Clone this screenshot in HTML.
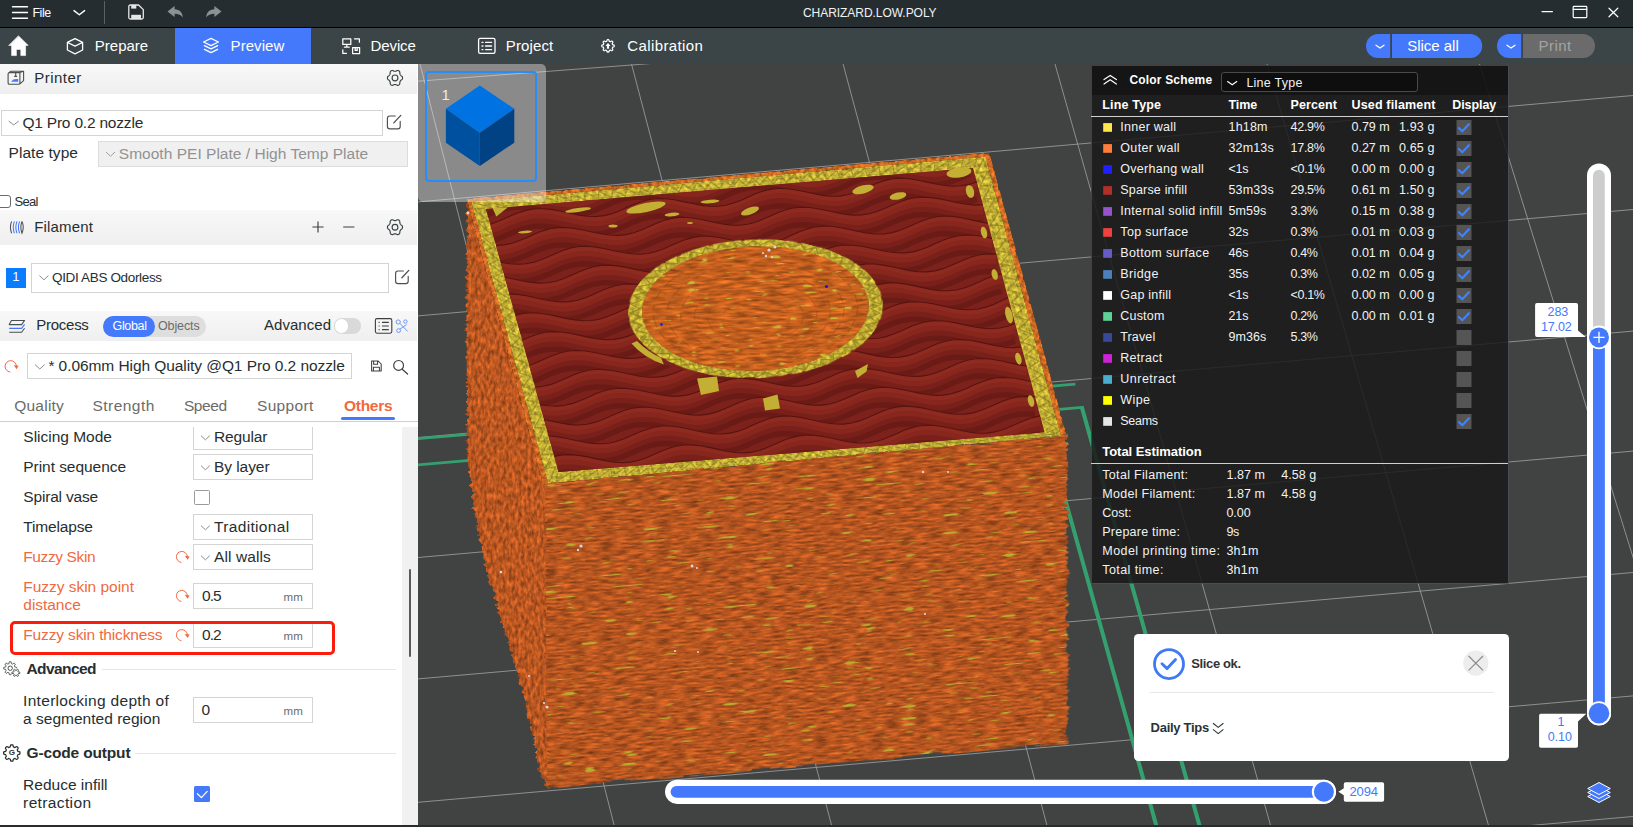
<!DOCTYPE html>
<html lang="en">
<head>
<meta charset="utf-8">
<title>CHARIZARD.LOW.POLY</title>
<style>
*{box-sizing:border-box;margin:0;padding:0}
html,body{width:1633px;height:827px;overflow:hidden;background:#414342;font-family:"Liberation Sans",sans-serif;color:#262e30}
.abs,.t,.box,.hdr{position:absolute}
#app{position:relative;width:1633px;height:827px;overflow:hidden}
.t{white-space:nowrap;line-height:1}
.w{color:#fff}
.hdr{left:0;width:417px;background:linear-gradient(#f8f8f8,#efefef)}
.box{border:1px solid #d4d4d4;background:#fff}
svg{position:absolute;overflow:visible}
</style>
</head>
<body>
<div id="app">
<div class="abs" style="left:418px;top:64px;width:1215px;height:763px;background:#414342;overflow:hidden">
<svg style="left:0;top:0" width="1215" height="763" viewBox="418 64 1215 763">
<defs>
<filter id="fFront" x="500" y="480" width="620" height="400" filterUnits="userSpaceOnUse" color-interpolation-filters="sRGB">
 <feFlood flood-color="#b55520" result="base"/>
 <feTurbulence type="fractalNoise" baseFrequency="0.07 0.5" numOctaves="3" seed="3" result="n"/>
 <feColorMatrix in="n" type="matrix" values="1 0 0 0 0  1 0 0 0 0  1 0 0 0 0  0 0 0 0 1" result="g"/>
 <feComposite in="base" in2="g" operator="arithmetic" k1="1.0" k2="0.5" k3="0" k4="0" result="c"/>
 <feTurbulence type="fractalNoise" baseFrequency="0.05 0.33" numOctaves="1" seed="11" result="n2"/>
 <feColorMatrix in="n2" type="matrix" values="0 0 0 0 0.72  0 0 0 0 0.68  0 0 0 0 0.18  16 0 0 0 -10.9" result="y"/>
 <feComposite in="y" in2="c" operator="over" result="cy"/>
 <feTurbulence type="fractalNoise" baseFrequency="0.02 0.3" numOctaves="2" seed="5" result="d"/>
 <feDisplacementMap in="SourceGraphic" in2="d" scale="9" xChannelSelector="R" yChannelSelector="G" result="shape"/>
 <feComposite in="cy" in2="shape" operator="in"/>
</filter>
<filter id="fLeft" x="440" y="170" width="140" height="660" filterUnits="userSpaceOnUse" color-interpolation-filters="sRGB">
 <feFlood flood-color="#ba5721" result="base"/>
 <feTurbulence type="fractalNoise" baseFrequency="0.32 0.16" numOctaves="2" seed="8" result="n"/>
 <feColorMatrix in="n" type="matrix" values="1 0 0 0 0  1 0 0 0 0  1 0 0 0 0  0 0 0 0 1" result="g"/>
 <feComposite in="base" in2="g" operator="arithmetic" k1="0.9" k2="0.55" k3="0" k4="0" result="c"/>
 <feTurbulence type="fractalNoise" baseFrequency="0.06 0.25" numOctaves="2" seed="15" result="d"/>
 <feDisplacementMap in="SourceGraphic" in2="d" scale="8" xChannelSelector="R" yChannelSelector="G" result="shape"/>
 <feComposite in="c" in2="shape" operator="in"/>
</filter>
<filter id="fYel" x="440" y="130" width="660" height="380" filterUnits="userSpaceOnUse" color-interpolation-filters="sRGB">
 <feTurbulence type="fractalNoise" baseFrequency="0.25 0.25" numOctaves="2" seed="21" result="n"/>
 <feColorMatrix in="n" type="matrix" values="1 0 0 0 0  1 0 0 0 0  1 0 0 0 0  0 0 0 0 1" result="g"/>
 <feComposite in="SourceGraphic" in2="g" operator="arithmetic" k1="0.9" k2="0.55" k3="0" k4="0" result="c"/>
 <feTurbulence type="fractalNoise" baseFrequency="0.12 0.12" numOctaves="2" seed="2" result="d"/>
 <feDisplacementMap in="SourceGraphic" in2="d" scale="4" xChannelSelector="R" yChannelSelector="G" result="shape"/>
 <feComposite in="c" in2="shape" operator="in"/>
</filter>
<filter id="fHole" x="620" y="230" width="280" height="160" filterUnits="userSpaceOnUse" color-interpolation-filters="sRGB">
 <feTurbulence type="fractalNoise" baseFrequency="0.06 0.4" numOctaves="2" seed="9" result="n"/>
 <feColorMatrix in="n" type="matrix" values="1 0 0 0 0  1 0 0 0 0  1 0 0 0 0  0 0 0 0 1" result="g"/>
 <feComposite in="SourceGraphic" in2="g" operator="arithmetic" k1="0.9" k2="0.55" k3="0" k4="0" result="c"/>
 <feTurbulence type="fractalNoise" baseFrequency="0.07 0.3" numOctaves="1" seed="4" result="n2"/>
 <feColorMatrix in="n2" type="matrix" values="0 0 0 0 0.78  0 0 0 0 0.72  0 0 0 0 0.2  16 0 0 0 -10.8" result="y"/>
 <feComposite in="y" in2="c" operator="over" result="cy"/>
 <feComposite in="cy" in2="SourceGraphic" operator="in"/>
</filter>
<clipPath id="cRed"><polygon points="486,209 973,168 1044.6,432.3 558.6,472"/></clipPath>
</defs>
<path d="M418 81.2L650 63.6M418 201.9L1633 95.5M418 315.9L1633 209.5M418 437.5L1633 331.1M418 557.5L1633 451.1M418 678.9L1633 572.5M418 802.3L1633 695.9M418 922.9L1633 816.5M420 64L614.6 827M631.5 64L832 827M843.1 64L1047.4 827M1055 64L1271 827M1267 64L1489 827M1479.5 64L1717 827" stroke="#9a9d9e" stroke-width="1" fill="none" opacity="0.85"/>
<path d="M418 438.6L1075.4 384.2M418 464.8L1082 407.4" stroke="#35a06f" stroke-width="2.7" fill="none"/>
<path d="M1081.6 406.4L1200 827.4M1033 384L1156.8 827.4" stroke="#35a06f" stroke-width="4" fill="none"/>
<polygon points="467,199 553,482 554,787 547,787.5 539.7,770 526.4,704 506.5,637 486.5,571 473,504 467.5,460 466.5,340" fill="#ba5721" filter="url(#fLeft)"/>
<g transform="matrix(1 -0.0875 0 1 0 0)"><polygon points="545,529.8 1067,527.4 1067.5,836.6 547,835.4" fill="#b55520" filter="url(#fFront)"/></g>
<polygon points="466.5,198.5 989.5,152.5 1066.5,434.5 543,484.5" fill="#cf6a25" filter="url(#fYel)"/>
<polygon points="471,201.5 985.5,156.5 1061,436 548,483.5" fill="#c2af34" filter="url(#fYel)"/>
<path d="M472.8 202.4L490.9 207.5L486.8 201.2L504.3 206.4L500.8 200.0L517.8 205.3L514.8 198.7L531.2 204.1L528.8 197.5L544.6 203.0L542.8 196.3L558.1 201.8L556.8 195.1L571.5 200.7L570.8 193.9L584.9 199.6L584.8 192.6L598.4 198.4L598.8 191.4L611.8 197.3L612.9 190.2L625.2 196.2L626.9 189.0L638.7 195.0L640.9 187.8L652.1 193.9L654.9 186.5L665.5 192.8L668.9 185.3L679.0 191.6L682.9 184.1L692.4 190.5L696.9 182.9L705.8 189.3L710.9 181.7L719.3 188.2L724.9 180.4L732.7 187.1L738.9 179.2L746.1 185.9L752.9 178.0L759.6 184.8L766.9 176.8L773.0 183.7L780.9 175.6L786.4 182.5L794.9 174.3L799.9 181.4L808.9 173.1L813.3 180.3L822.9 171.9L826.7 179.1L836.9 170.7L840.2 178.0L850.9 169.5L853.6 176.8L865.0 168.2L867.0 175.7L879.0 167.0L880.5 174.6L893.0 165.8L893.9 173.4L907.0 164.6L907.3 172.3L921.0 163.4L920.8 171.2L935.0 162.1L934.2 170.0L949.0 160.9L947.6 168.9L963.0 159.7L961.1 167.8L977.0 158.5L974.5 166.6M984.0 157.9L976.3 173.1L987.7 171.4L979.8 186.1L991.3 185.0L983.3 199.1L995.0 198.5L986.8 212.1L998.6 212.1L990.3 225.0L1002.3 225.6L993.8 238.0L1006.0 239.2L997.4 251.0L1009.6 252.7L1000.9 264.0L1013.3 266.2L1004.4 277.0L1016.9 279.8L1007.9 289.9L1020.6 293.3L1011.4 302.9L1024.3 306.9L1014.9 315.9L1027.9 320.4L1018.4 328.9L1031.6 334.0L1022.0 341.9L1035.2 347.5L1025.5 354.9L1038.9 361.1L1029.0 367.8L1042.6 374.6L1032.5 380.8L1046.2 388.1L1036.0 393.8L1049.9 401.7L1039.5 406.8L1053.5 415.2L1043.1 419.8L1057.2 428.8L1046.6 432.7M1059.0 435.6L1039.9 433.3L1045.1 436.8L1026.5 434.4L1031.1 438.1L1013.1 435.5L1017.1 439.4L999.7 436.6L1003.2 440.7L986.3 437.8L989.2 441.9L972.8 438.9L975.2 443.2L959.4 440.0L961.3 444.5L946.0 441.1L947.3 445.8L932.6 442.2L933.3 447.0L919.2 443.3L919.4 448.3L905.8 444.4L905.4 449.6L892.4 445.5L891.4 450.9L879.0 446.7L877.5 452.1L865.6 447.8L863.5 453.4L852.2 448.9L849.5 454.7L838.8 450.0L835.6 456.0L825.4 451.1L821.6 457.2L812.0 452.2L807.6 458.5L798.6 453.3L793.7 459.8L785.2 454.5L779.7 461.1L771.8 455.6L765.7 462.3L758.4 456.7L751.8 463.6L745.0 457.8L737.8 464.9L731.6 458.9L723.8 466.2L718.2 460.0L709.9 467.4L704.8 461.1L695.9 468.7L691.4 462.2L681.9 470.0L678.0 463.4L668.0 471.3L664.6 464.5L654.0 472.6L651.2 465.6L640.1 473.8L637.8 466.7L626.1 475.1L624.3 467.8L612.1 476.4L610.9 468.9L598.2 477.7L597.5 470.0L584.2 478.9L584.1 471.2L570.2 480.2L570.7 472.3L556.3 481.5L557.3 473.4M549.3 482.1L555.5 466.9L545.5 468.5L552.0 454.0L541.8 454.8L548.4 441.0L538.1 441.2L544.8 428.1L534.4 427.5L541.3 415.1L530.6 413.9L537.7 402.2L526.9 400.3L534.1 389.3L523.2 386.6L530.6 376.3L519.4 373.0L527.0 363.4L515.7 359.3L523.4 350.4L512.0 345.7L519.9 337.5L508.2 332.0L516.3 324.6L504.5 318.4L512.7 311.6L500.8 304.7L509.2 298.7L497.0 291.1L505.6 285.7L493.3 277.4L502.0 272.8L489.6 263.8L498.5 259.9L485.9 250.2L494.9 246.9L482.1 236.5L491.3 234.0L478.4 222.9L487.8 221.0L474.7 209.2L484.2 208.1" stroke="#8f7f1e" stroke-width="1.3" fill="none" opacity="0.75" stroke-linejoin="round"/>
<path d="M475.5 203.8L981.8 159.9M481.5 206.8L976.8 164.6M981.8 159.9L1056.1 434.9M976.8 164.6L1049.5 433.4M1056.1 434.9L551.2 480.1M1049.5 433.4L555.4 475.4M551.2 480.1L475.5 203.8M555.4 475.4L481.5 206.8" stroke="#dccb55" stroke-width="1" fill="none" opacity="0.4"/>
<polygon points="486,209 973,168 1044.6,432.3 558.6,472" fill="#7c211b"/>
<g clip-path="url(#cRed)" fill="none">
<defs><path id="wv0" d="M476.4 174.1L484.1 172.0L492.1 171.0L500.5 171.1L509.1 172.2L517.9 173.9L526.7 175.9L535.5 177.6L544.1 178.7L552.4 178.8L560.4 177.7L568.2 175.6L575.7 172.7L583.1 169.4L590.5 166.2L598.0 163.4L605.8 161.6L613.9 160.8L622.3 161.1L631.0 162.3L639.8 164.1L648.6 166.1L657.4 167.7L665.9 168.6L674.2 168.5L682.2 167.3L689.9 165.0L697.3 162.0L704.7 158.7L712.2 155.5L719.7 152.8L727.6 151.2L735.7 150.6L744.2 151.1L752.9 152.5L761.7 154.4L770.5 156.3L779.3 157.8L787.8 158.5L796.0 158.2L803.9 156.8L811.5 154.3L819.0 151.2L826.4 147.9L833.8 144.8L841.5 142.3L849.4 140.8L857.6 140.4L866.1 141.1L874.8 142.6L883.6 144.6L892.4 146.5L901.1 147.9L909.6 148.4L917.7 147.9L925.6 146.2L933.2 143.6L940.6 140.5L948.0 137.1L955.5 134.1L963.2 131.8"/></defs>
<use href="#wv0" stroke="#8f2a20" stroke-width="5.4" transform="translate(0,2.5)"/>
<use href="#wv0" stroke="#86261d" stroke-width="5.4" transform="translate(0,7.5)"/>
<use href="#wv0" stroke="#79201a" stroke-width="5.4" transform="translate(0,12.5)"/>
<use href="#wv0" stroke="#6b1b16" stroke-width="5.4" transform="translate(0,17.5)"/>
<defs><path id="wv1" d="M483.3 199.3L490.7 196.0L498.2 193.1L505.9 190.9L513.9 189.8L522.3 189.9L530.8 190.9L539.6 192.6L548.5 194.6L557.3 196.4L565.9 197.5L574.2 197.6L582.3 196.7L590.0 194.7L597.5 191.8L604.9 188.5L612.3 185.2L619.9 182.4L627.7 180.5L635.7 179.6L644.1 179.9L652.7 181.0L661.5 182.8L670.4 184.8L679.1 186.5L687.7 187.5L696.0 187.4L704.0 186.3L711.7 184.1L719.2 181.1L726.6 177.8L734.0 174.5L741.6 171.9L749.4 170.1L757.5 169.4L765.9 169.9L774.6 171.2L783.4 173.1L792.3 175.0L801.0 176.6L809.5 177.4L817.7 177.2L825.7 175.8L833.3 173.4L840.8 170.4L848.2 167.0L855.6 163.9L863.3 161.3L871.1 159.8L879.3 159.3L887.8 159.9L896.5 161.4L905.3 163.3L914.1 165.2L922.8 166.7L931.3 167.3L939.5 166.9L947.4 165.3L955.0 162.8L962.4 159.6L969.8 156.3"/></defs>
<use href="#wv1" stroke="#8f2a20" stroke-width="5.4" transform="translate(0,2.5)"/>
<use href="#wv1" stroke="#86261d" stroke-width="5.4" transform="translate(0,7.5)"/>
<use href="#wv1" stroke="#79201a" stroke-width="5.4" transform="translate(0,12.5)"/>
<use href="#wv1" stroke="#6b1b16" stroke-width="5.4" transform="translate(0,17.5)"/>
<defs><path id="wv2" d="M490.2 224.2L497.8 221.6L505.2 218.3L512.6 215.0L520.1 212.1L527.8 209.9L535.7 208.7L544.0 208.7L552.6 209.6L561.4 211.3L570.2 213.3L579.0 215.1L587.7 216.3L596.0 216.5L604.1 215.6L611.9 213.7L619.4 210.9L626.8 207.6L634.2 204.3L641.7 201.5L649.5 199.5L657.5 198.5L665.9 198.7L674.5 199.8L683.3 201.6L692.1 203.5L700.9 205.2L709.5 206.3L717.8 206.3L725.8 205.2L733.5 203.1L741.0 200.2L748.4 196.9L755.8 193.6L763.4 190.9L771.2 189.1L779.3 188.3L787.7 188.7L796.3 190.0L805.1 191.8L814.0 193.8L822.7 195.4L831.2 196.3L839.5 196.1L847.5 194.8L855.1 192.5L862.6 189.5L870.0 186.1L877.4 183.0L885.0 180.4L892.9 178.7L901.0 178.2L909.5 178.7L918.2 180.2L927.0 182.1L935.8 184.0L944.5 185.5L953.0 186.2L961.2 185.8L969.1 184.4L976.8 181.9"/></defs>
<use href="#wv2" stroke="#8f2a20" stroke-width="5.4" transform="translate(0,2.5)"/>
<use href="#wv2" stroke="#86261d" stroke-width="5.4" transform="translate(0,7.5)"/>
<use href="#wv2" stroke="#79201a" stroke-width="5.4" transform="translate(0,12.5)"/>
<use href="#wv2" stroke="#6b1b16" stroke-width="5.4" transform="translate(0,17.5)"/>
<defs><path id="wv3" d="M496.1 245.5L504.2 244.9L512.0 243.2L519.6 240.6L527.1 237.4L534.4 234.1L541.9 231.1L549.6 228.8L557.6 227.6L565.8 227.5L574.4 228.4L583.1 230.0L592.0 232.0L600.8 233.8L609.4 235.0L617.8 235.4L625.9 234.6L633.7 232.7L641.2 230.0L648.6 226.7L656.0 223.4L663.5 220.5L671.3 218.4L679.3 217.4L687.6 217.5L696.2 218.5L705.0 220.3L713.8 222.2L722.6 224.0L731.2 225.1L739.5 225.2L747.6 224.2L755.3 222.2L762.8 219.3L770.2 216.0L777.6 212.7L785.2 210.0L793.0 208.0L801.0 207.2L809.4 207.5L818.0 208.7L826.8 210.5L835.7 212.5L844.4 214.2L853.0 215.1L861.3 215.0L869.2 213.8L876.9 211.6L884.4 208.6L891.8 205.3L899.2 202.1L906.8 199.4L914.7 197.7L922.8 197.1L931.2 197.6L939.9 198.9L948.7 200.8L957.5 202.8L966.2 204.3L974.8 205.1L983.0 204.8"/></defs>
<use href="#wv3" stroke="#8f2a20" stroke-width="5.4" transform="translate(0,2.5)"/>
<use href="#wv3" stroke="#86261d" stroke-width="5.4" transform="translate(0,7.5)"/>
<use href="#wv3" stroke="#79201a" stroke-width="5.4" transform="translate(0,12.5)"/>
<use href="#wv3" stroke="#6b1b16" stroke-width="5.4" transform="translate(0,17.5)"/>
<defs><path id="wv4" d="M500.7 262.3L509.4 263.7L517.9 264.3L526.0 263.8L533.9 262.2L541.5 259.6L548.9 256.5L556.3 253.2L563.8 250.1L571.4 247.8L579.4 246.5L587.6 246.3L596.1 247.1L604.9 248.7L613.7 250.7L622.5 252.5L631.2 253.8L639.6 254.2L647.7 253.5L655.5 251.7L663.1 249.0L670.5 245.8L677.9 242.5L685.4 239.6L693.1 237.4L701.1 236.3L709.4 236.3L717.9 237.3L726.7 239.0L735.5 241.0L744.3 242.8L753.0 243.9L761.3 244.1L769.4 243.2L777.1 241.2L784.6 238.4L792.0 235.1L799.4 231.8L807.0 229.0L814.7 227.0L822.8 226.1L831.1 226.3L839.8 227.5L848.5 229.3L857.4 231.3L866.1 233.0L874.7 234.0L883.0 234.0L891.0 232.9L898.7 230.7L906.2 227.8L913.6 224.4L921.0 221.2L928.6 218.5L936.4 216.7L944.5 216.0L952.9 216.4L961.6 217.7L970.4 219.6L979.2 221.6L987.9 223.2"/></defs>
<use href="#wv4" stroke="#8f2a20" stroke-width="5.4" transform="translate(0,2.5)"/>
<use href="#wv4" stroke="#86261d" stroke-width="5.4" transform="translate(0,7.5)"/>
<use href="#wv4" stroke="#79201a" stroke-width="5.4" transform="translate(0,12.5)"/>
<use href="#wv4" stroke="#6b1b16" stroke-width="5.4" transform="translate(0,17.5)"/>
<defs><path id="wv5" d="M504.8 277.1L513.6 279.0L522.5 281.0L531.2 282.4L539.7 283.1L547.8 282.7L555.7 281.2L563.3 278.7L570.8 275.6L578.1 272.2L585.6 269.2L593.2 266.8L601.2 265.4L609.4 265.1L617.9 265.9L626.6 267.4L635.5 269.4L644.3 271.2L652.9 272.6L661.4 273.1L669.5 272.5L677.3 270.8L684.9 268.1L692.3 264.9L699.7 261.6L707.2 258.6L714.9 256.4L722.8 255.2L731.1 255.1L739.7 256.1L748.4 257.7L757.3 259.7L766.1 261.5L774.7 262.7L783.1 263.0L791.1 262.2L798.9 260.3L806.5 257.5L813.9 254.3L821.3 251.0L828.8 248.1L836.5 246.0L844.5 245.0L852.9 245.2L861.5 246.3L870.2 248.0L879.1 250.0L887.9 251.8L896.4 252.8L904.8 252.9L912.8 251.9L920.5 249.8L928.0 246.9L935.4 243.6L942.8 240.3L950.4 237.6L958.2 235.7L966.2 234.9L974.6 235.3L983.3 236.5L992.1 238.4"/></defs>
<use href="#wv5" stroke="#8f2a20" stroke-width="5.4" transform="translate(0,2.5)"/>
<use href="#wv5" stroke="#86261d" stroke-width="5.4" transform="translate(0,7.5)"/>
<use href="#wv5" stroke="#79201a" stroke-width="5.4" transform="translate(0,12.5)"/>
<use href="#wv5" stroke="#6b1b16" stroke-width="5.4" transform="translate(0,17.5)"/>
<defs><path id="wv6" d="M509.4 293.9L517.9 294.4L526.6 295.8L535.4 297.7L544.2 299.7L552.9 301.2L561.4 301.9L569.6 301.6L577.5 300.2L585.2 297.7L592.6 294.7L600.0 291.3L607.4 288.2L615.1 285.8L623.0 284.3L631.2 283.9L639.6 284.6L648.4 286.1L657.2 288.1L666.0 290.0L674.7 291.4L683.1 291.9L691.3 291.4L699.1 289.8L706.7 287.2L714.1 284.0L721.5 280.7L729.0 277.7L736.7 275.4L744.6 274.1L752.9 274.0L761.4 274.8L770.1 276.5L779.0 278.4L787.8 280.3L796.4 281.6L804.8 281.9L812.9 281.2L820.7 279.4L828.3 276.6L835.7 273.4L843.1 270.1L850.6 267.2L858.3 265.1L866.3 264.0L874.6 264.0L883.2 265.1L891.9 266.8L900.8 268.8L909.6 270.6L918.2 271.7L926.5 271.9L934.5 270.9L942.3 268.9L949.8 266.1L957.2 262.8L964.6 259.5L972.1 256.7L979.9 254.7L988.0 253.9L996.3 254.1"/></defs>
<use href="#wv6" stroke="#8f2a20" stroke-width="5.4" transform="translate(0,2.5)"/>
<use href="#wv6" stroke="#86261d" stroke-width="5.4" transform="translate(0,7.5)"/>
<use href="#wv6" stroke="#79201a" stroke-width="5.4" transform="translate(0,12.5)"/>
<use href="#wv6" stroke="#6b1b16" stroke-width="5.4" transform="translate(0,17.5)"/>
<defs><path id="wv7" d="M515.3 315.2L523.1 313.4L531.2 312.8L539.7 313.2L548.3 314.5L557.1 316.4L566.0 318.4L574.7 319.9L583.2 320.7L591.4 320.5L599.4 319.2L607.0 316.8L614.5 313.8L621.8 310.4L629.3 307.3L636.9 304.8L644.7 303.2L652.9 302.8L661.4 303.4L670.1 304.9L678.9 306.8L687.7 308.7L696.4 310.2L704.9 310.8L713.1 310.4L720.9 308.8L728.5 306.3L736.0 303.2L743.4 299.8L750.8 296.8L758.5 294.4L766.4 293.0L774.6 292.8L783.1 293.6L791.9 295.2L800.7 297.2L809.5 299.0L818.2 300.4L826.6 300.8L834.7 300.2L842.5 298.4L850.1 295.8L857.5 292.6L864.9 289.2L872.4 286.3L880.1 284.1L888.0 282.9L896.3 282.9L904.9 283.9L913.6 285.6L922.5 287.6L931.3 289.4L939.9 290.6L948.2 290.8L956.3 290.0L964.1 288.0L971.6 285.2L979.0 281.9L986.4 278.6L993.9 275.8L1001.7 273.8"/></defs>
<use href="#wv7" stroke="#8f2a20" stroke-width="5.4" transform="translate(0,2.5)"/>
<use href="#wv7" stroke="#86261d" stroke-width="5.4" transform="translate(0,7.5)"/>
<use href="#wv7" stroke="#79201a" stroke-width="5.4" transform="translate(0,12.5)"/>
<use href="#wv7" stroke="#6b1b16" stroke-width="5.4" transform="translate(0,17.5)"/>
<defs><path id="wv8" d="M522.2 340.1L529.6 336.9L537.1 334.2L544.9 332.3L553.0 331.6L561.4 332.0L570.1 333.3L578.9 335.1L587.7 337.1L596.4 338.7L605.0 339.6L613.2 339.4L621.2 338.1L628.8 335.9L636.3 332.8L643.7 329.5L651.1 326.4L658.7 323.8L666.5 322.2L674.7 321.6L683.1 322.2L691.8 323.6L700.6 325.5L709.5 327.5L718.2 329.0L726.6 329.7L734.8 329.3L742.7 327.8L750.4 325.4L757.8 322.3L765.2 318.9L772.6 315.9L780.3 313.4L788.2 312.0L796.4 311.7L804.9 312.4L813.6 314.0L822.4 315.9L831.2 317.8L839.9 319.2L848.3 319.7L856.4 319.2L864.3 317.5L871.9 314.9L879.3 311.7L886.7 308.4L894.1 305.4L901.8 303.1L909.8 301.9L918.0 301.8L926.6 302.7L935.3 304.3L944.1 306.3L952.9 308.2L961.6 309.4L970.0 309.8L978.0 309.0L985.8 307.1L993.4 304.4L1000.8 301.1L1008.2 297.8"/></defs>
<use href="#wv8" stroke="#8f2a20" stroke-width="5.4" transform="translate(0,2.5)"/>
<use href="#wv8" stroke="#86261d" stroke-width="5.4" transform="translate(0,7.5)"/>
<use href="#wv8" stroke="#79201a" stroke-width="5.4" transform="translate(0,12.5)"/>
<use href="#wv8" stroke="#6b1b16" stroke-width="5.4" transform="translate(0,17.5)"/>
<defs><path id="wv9" d="M529.2 365.3L536.7 362.5L544.0 359.2L551.4 355.9L559.0 353.2L566.7 351.3L574.8 350.5L583.2 350.8L591.8 352.0L600.6 353.8L609.4 355.8L618.2 357.5L626.7 358.4L635.0 358.3L643.0 357.1L650.7 354.9L658.1 352.0L665.5 348.6L672.9 345.4L680.5 342.8L688.3 341.1L696.4 340.5L704.9 341.0L713.5 342.3L722.3 344.2L731.2 346.2L739.9 347.8L748.4 348.5L756.6 348.3L764.5 346.9L772.2 344.5L779.6 341.4L787.0 338.1L794.4 335.0L802.0 332.5L809.9 331.0L818.1 330.6L826.6 331.2L835.3 332.7L844.1 334.7L852.9 336.6L861.6 338.0L870.0 338.6L878.2 338.2L886.1 336.6L893.6 334.0L901.1 330.9L908.5 327.5L915.9 324.5L923.6 322.2L931.5 320.9L939.8 320.7L948.3 321.5L957.0 323.1L965.8 325.1L974.6 327.0L983.3 328.3L991.7 328.7L999.8 328.0L1007.6 326.2L1015.1 323.5"/></defs>
<use href="#wv9" stroke="#8f2a20" stroke-width="5.4" transform="translate(0,2.5)"/>
<use href="#wv9" stroke="#86261d" stroke-width="5.4" transform="translate(0,7.5)"/>
<use href="#wv9" stroke="#79201a" stroke-width="5.4" transform="translate(0,12.5)"/>
<use href="#wv9" stroke="#6b1b16" stroke-width="5.4" transform="translate(0,17.5)"/>
<defs><path id="wv10" d="M535.2 387.2L543.2 386.3L551.0 384.4L558.5 381.6L565.9 378.3L573.3 375.0L580.8 372.2L588.5 370.2L596.6 369.3L604.9 369.6L613.5 370.7L622.3 372.5L631.2 374.5L639.9 376.2L648.5 377.2L656.8 377.2L664.8 376.1L672.5 374.0L680.0 371.1L687.3 367.8L694.7 364.5L702.3 361.9L710.1 360.1L718.2 359.4L726.6 359.8L735.3 361.1L744.1 363.0L752.9 364.9L761.6 366.6L770.1 367.4L778.4 367.2L786.3 365.9L794.0 363.6L801.4 360.5L808.8 357.2L816.2 354.1L823.8 351.5L831.7 349.9L839.8 349.5L848.3 350.0L857.0 351.5L865.8 353.4L874.6 355.4L883.3 356.9L891.8 357.5L899.9 357.1L907.8 355.6L915.4 353.2L922.9 350.0L930.2 346.7L937.7 343.6L945.3 341.2L953.3 339.8L961.5 339.6L970.0 340.3L978.7 341.9L987.5 343.9L996.3 345.8L1005.0 347.2L1013.4 347.6L1021.5 347.0"/></defs>
<use href="#wv10" stroke="#8f2a20" stroke-width="5.4" transform="translate(0,2.5)"/>
<use href="#wv10" stroke="#86261d" stroke-width="5.4" transform="translate(0,7.5)"/>
<use href="#wv10" stroke="#79201a" stroke-width="5.4" transform="translate(0,12.5)"/>
<use href="#wv10" stroke="#6b1b16" stroke-width="5.4" transform="translate(0,17.5)"/>
<defs><path id="wv11" d="M540.0 404.6L548.6 405.8L557.0 406.1L565.0 405.3L572.8 403.4L580.3 400.6L587.7 397.4L595.1 394.1L602.6 391.2L610.3 389.2L618.4 388.2L626.7 388.4L635.3 389.5L644.1 391.2L652.9 393.2L661.7 395.0L670.2 396.1L678.6 396.1L686.6 395.1L694.3 393.0L701.8 390.2L709.2 386.9L716.6 383.6L724.1 380.9L731.9 379.0L740.0 378.3L748.3 378.6L757.0 379.9L765.8 381.7L774.6 383.7L783.3 385.4L791.9 386.3L800.1 386.2L808.1 384.9L815.7 382.7L823.2 379.7L830.6 376.4L838.0 373.2L845.6 370.6L853.4 368.9L861.6 368.4L870.0 368.9L878.7 370.3L887.5 372.2L896.3 374.2L905.0 375.7L913.5 376.4L921.7 376.1L929.6 374.7L937.2 372.3L944.7 369.2L952.0 365.9L959.5 362.8L967.1 360.3L975.0 358.8L983.2 358.5L991.7 359.2L1000.4 360.7L1009.2 362.7L1018.0 364.6L1026.6 366.0"/></defs>
<use href="#wv11" stroke="#8f2a20" stroke-width="5.4" transform="translate(0,2.5)"/>
<use href="#wv11" stroke="#86261d" stroke-width="5.4" transform="translate(0,7.5)"/>
<use href="#wv11" stroke="#79201a" stroke-width="5.4" transform="translate(0,12.5)"/>
<use href="#wv11" stroke="#6b1b16" stroke-width="5.4" transform="translate(0,17.5)"/>
<defs><path id="wv12" d="M544.1 419.5L552.9 421.4L561.7 423.3L570.4 424.6L578.8 425.0L586.8 424.2L594.6 422.4L602.2 419.7L609.6 416.5L617.0 413.2L624.4 410.3L632.1 408.2L640.1 407.1L648.4 407.2L657.0 408.2L665.8 410.0L674.6 412.0L683.4 413.7L692.0 414.9L700.3 415.1L708.4 414.1L716.1 412.1L723.6 409.3L731.0 406.0L738.4 402.8L745.9 400.0L753.7 398.0L761.7 397.2L770.1 397.4L778.7 398.6L787.5 400.5L796.3 402.5L805.0 404.2L813.6 405.1L821.9 405.1L829.8 404.0L837.5 401.8L845.0 398.8L852.4 395.5L859.8 392.3L867.4 389.7L875.2 387.9L883.3 387.3L891.7 387.7L900.3 389.1L909.1 391.0L918.0 392.9L926.7 394.5L935.2 395.4L943.4 395.1L951.3 393.8L959.0 391.4L966.4 388.4L973.8 385.0L981.2 381.9L988.8 379.4L996.7 377.8L1004.9 377.4L1013.3 378.0L1022.0 379.5L1030.8 381.5"/></defs>
<use href="#wv12" stroke="#8f2a20" stroke-width="5.4" transform="translate(0,2.5)"/>
<use href="#wv12" stroke="#86261d" stroke-width="5.4" transform="translate(0,7.5)"/>
<use href="#wv12" stroke="#79201a" stroke-width="5.4" transform="translate(0,12.5)"/>
<use href="#wv12" stroke="#6b1b16" stroke-width="5.4" transform="translate(0,17.5)"/>
<defs><path id="wv13" d="M548.6 435.8L557.1 436.6L565.8 438.2L574.7 440.2L583.5 442.0L592.1 443.4L600.5 443.8L608.6 443.2L616.4 441.5L624.0 438.8L631.4 435.6L638.8 432.3L646.3 429.4L653.9 427.2L661.9 426.0L670.2 426.0L678.7 427.0L687.5 428.7L696.3 430.7L705.1 432.5L713.7 433.7L722.1 434.0L730.1 433.1L737.9 431.2L745.4 428.4L752.8 425.1L760.2 421.9L767.7 419.0L775.4 417.0L783.5 416.1L791.8 416.3L800.4 417.4L809.2 419.2L818.0 421.2L826.7 423.0L835.3 424.0L843.6 424.1L851.6 423.0L859.3 420.9L866.8 418.0L874.2 414.7L881.6 411.5L889.1 408.8L896.9 406.9L905.0 406.2L913.4 406.6L922.0 407.9L930.8 409.7L939.6 411.7L948.4 413.4L956.9 414.3L965.1 414.1L973.1 412.9L980.7 410.6L988.2 407.6L995.6 404.2L1003.0 401.1L1010.6 398.5L1018.4 396.9L1026.6 396.4L1035.0 396.9"/></defs>
<use href="#wv13" stroke="#8f2a20" stroke-width="5.4" transform="translate(0,2.5)"/>
<use href="#wv13" stroke="#86261d" stroke-width="5.4" transform="translate(0,7.5)"/>
<use href="#wv13" stroke="#79201a" stroke-width="5.4" transform="translate(0,12.5)"/>
<use href="#wv13" stroke="#6b1b16" stroke-width="5.4" transform="translate(0,17.5)"/>
<defs><path id="wv14" d="M554.3 456.4L562.2 454.9L570.4 454.6L578.9 455.4L587.6 456.9L596.4 458.9L605.2 460.8L613.9 462.2L622.3 462.7L630.4 462.1L638.3 460.5L645.8 457.9L653.2 454.7L660.6 451.4L668.1 448.4L675.7 446.2L683.7 445.0L691.9 444.9L700.5 445.8L709.2 447.4L718.0 449.4L726.8 451.3L735.5 452.5L743.8 452.9L751.9 452.1L759.7 450.3L767.2 447.5L774.6 444.3L782.0 441.0L789.5 438.1L797.2 436.1L805.2 435.0L813.5 435.1L822.1 436.2L830.9 438.0L839.7 440.0L848.4 441.8L857.0 442.9L865.4 443.0L873.4 442.0L881.1 440.0L888.6 437.1L896.0 433.9L903.4 430.6L910.9 427.9L918.7 426.0L926.7 425.2L935.1 425.5L943.7 426.7L952.5 428.5L961.3 430.5L970.1 432.2L978.6 433.2L986.9 433.1L994.8 431.9L1002.5 429.7L1010.0 426.7L1017.4 423.4L1024.8 420.2L1032.3 417.6L1040.2 415.9"/></defs>
<use href="#wv14" stroke="#8f2a20" stroke-width="5.4" transform="translate(0,2.5)"/>
<use href="#wv14" stroke="#86261d" stroke-width="5.4" transform="translate(0,7.5)"/>
<use href="#wv14" stroke="#79201a" stroke-width="5.4" transform="translate(0,12.5)"/>
<use href="#wv14" stroke="#6b1b16" stroke-width="5.4" transform="translate(0,17.5)"/>
<defs><path id="wv15" d="M561.1 480.9L568.5 477.8L576.1 475.4L584.0 473.9L592.1 473.5L600.6 474.1L609.3 475.6L618.1 477.6L626.9 479.5L635.6 481.0L644.1 481.6L652.2 481.1L660.1 479.5L667.6 477.0L675.1 473.9L682.4 470.5L689.9 467.5L697.5 465.2L705.4 463.9L713.7 463.7L722.2 464.6L730.9 466.2L739.7 468.2L748.5 470.0L757.2 471.4L765.6 471.8L773.7 471.1L781.5 469.3L789.0 466.7L796.4 463.4L803.8 460.1L811.3 457.2L819.0 455.1L826.9 454.0L835.2 454.0L843.8 455.0L852.5 456.8L861.4 458.8L870.1 460.6L878.7 461.7L887.1 462.0L895.1 461.1L902.9 459.1L910.4 456.3L917.8 453.0L925.2 449.8L932.7 447.0L940.4 445.0L948.5 444.1L956.8 444.3L965.4 445.5L974.2 447.3L983.0 449.3L991.7 451.1L1000.3 452.1L1008.6 452.1L1016.6 451.0L1024.3 448.9L1031.7 445.9L1039.1 442.6L1046.5 439.4"/></defs>
<use href="#wv15" stroke="#8f2a20" stroke-width="5.4" transform="translate(0,2.5)"/>
<use href="#wv15" stroke="#86261d" stroke-width="5.4" transform="translate(0,7.5)"/>
<use href="#wv15" stroke="#79201a" stroke-width="5.4" transform="translate(0,12.5)"/>
<use href="#wv15" stroke="#6b1b16" stroke-width="5.4" transform="translate(0,17.5)"/>
<use href="#wv0" stroke="#55140f" stroke-width="1.1"/>
<use href="#wv1" stroke="#55140f" stroke-width="1.1"/>
<use href="#wv2" stroke="#55140f" stroke-width="1.1"/>
<use href="#wv3" stroke="#55140f" stroke-width="1.1"/>
<use href="#wv4" stroke="#55140f" stroke-width="1.1"/>
<use href="#wv5" stroke="#55140f" stroke-width="1.1"/>
<use href="#wv6" stroke="#55140f" stroke-width="1.1"/>
<use href="#wv7" stroke="#55140f" stroke-width="1.1"/>
<use href="#wv8" stroke="#55140f" stroke-width="1.1"/>
<use href="#wv9" stroke="#55140f" stroke-width="1.1"/>
<use href="#wv10" stroke="#55140f" stroke-width="1.1"/>
<use href="#wv11" stroke="#55140f" stroke-width="1.1"/>
<use href="#wv12" stroke="#55140f" stroke-width="1.1"/>
<use href="#wv13" stroke="#55140f" stroke-width="1.1"/>
<use href="#wv14" stroke="#55140f" stroke-width="1.1"/>
<use href="#wv15" stroke="#55140f" stroke-width="1.1"/>
</g>
<ellipse cx="525" cy="232" rx="7.0" ry="1.3" fill="#c2af34" transform="rotate(-5 525 232)"/>
<ellipse cx="578" cy="210" rx="13.0" ry="2.0" fill="#c2af34" transform="rotate(-8 578 210)"/>
<ellipse cx="646" cy="207.5" rx="20.0" ry="4.5" fill="#c2af34" transform="rotate(-12 646 207.5)"/>
<ellipse cx="672" cy="214.5" rx="7.5" ry="1.75" fill="#c2af34" transform="rotate(-6 672 214.5)"/>
<ellipse cx="710" cy="201.5" rx="9.5" ry="1.75" fill="#c2af34" transform="rotate(-5 710 201.5)"/>
<ellipse cx="750" cy="211" rx="9.5" ry="3.5" fill="#c2af34" transform="rotate(-20 750 211)"/>
<ellipse cx="863" cy="189.5" rx="11.0" ry="4.0" fill="#c2af34" transform="rotate(-14 863 189.5)"/>
<ellipse cx="898" cy="196" rx="8.5" ry="3.5" fill="#c2af34" transform="rotate(-12 898 196)"/>
<ellipse cx="959" cy="172.5" rx="12.5" ry="5.0" fill="#c2af34" transform="rotate(-8 959 172.5)"/>
<ellipse cx="970" cy="191.5" rx="4.0" ry="6.5" fill="#c2af34" transform="rotate(-15 970 191.5)"/>
<ellipse cx="984" cy="232.5" rx="3.0" ry="6.0" fill="#c2af34" transform="rotate(-14 984 232.5)"/>
<ellipse cx="994.7" cy="274.5" rx="3.0" ry="5.5" fill="#c2af34" transform="rotate(-14 994.7 274.5)"/>
<ellipse cx="1009" cy="315" rx="3.5" ry="8.5" fill="#c2af34" transform="rotate(-14 1009 315)"/>
<ellipse cx="1018.4" cy="358.6" rx="3.0" ry="6.0" fill="#c2af34" transform="rotate(-14 1018.4 358.6)"/>
<ellipse cx="1031" cy="401" rx="3.0" ry="6.0" fill="#c2af34" transform="rotate(-14 1031 401)"/>
<ellipse cx="613" cy="226" rx="4.5" ry="1.5" fill="#c2af34" transform="rotate(0 613 226)"/>
<ellipse cx="690" cy="223" rx="3.0" ry="1.0" fill="#c2af34" transform="rotate(0 690 223)"/>
<polygon points="492.5,207.9 508,207.2 496.3,216.6" fill="#c2af34"/>
<polygon points="697,378.5 717,376.5 719,391 701,395" fill="#c2af34"/>
<polygon points="763,398.5 777.5,394.5 780,408.5 765,410.5" fill="#c2af34"/>
<polygon points="855,371 868,364 866.5,371.5 857.5,378" fill="#c2af34"/>
<path d="M631.5 343.5Q644 358 664 364.5L661 358Q648 352 637 341Z" fill="#c2af34"/>
<path d="M664 364.5L688 371L684 366L663 359Z" fill="#7c211b"/>
<ellipse cx="755.5" cy="308.7" rx="127.6" ry="69.5" fill="#c2af34" transform="rotate(-2 755.5 308.7)" filter="url(#fYel)"/>
<ellipse cx="755.4" cy="308.6" rx="113.5" ry="62.4" fill="#c4601f" transform="rotate(-2 755.4 308.6)" filter="url(#fHole)"/>
<path d="M880.9 304.3L870.8 308.8L880.2 313.2L869.1 317.1L877.3 322.1L865.5 325.3L872.3 330.7L860.0 333.2L865.3 338.9L852.7 340.7L856.4 346.6L843.7 347.6L845.9 353.7L833.3 353.8L833.7 359.9L821.5 359.3L820.3 365.4L808.5 363.9L805.7 369.8L794.7 367.6L790.3 373.2L780.2 370.3L774.2 375.5L765.3 371.9L757.9 376.7L750.2 372.4L741.5 376.6L735.2 371.8L725.3 375.5L720.5 370.2L709.7 373.2L706.4 367.5L694.8 369.7L693.2 363.8L681.0 365.3L681.1 359.1L668.5 359.9L670.2 353.6L657.4 353.5L660.8 347.4L648.1 346.5L653.0 340.4L640.5 338.8L646.9 332.9L635.0 330.5L642.7 325.1L631.5 321.9L640.5 316.9L630.1 313.1L640.2 308.6L630.8 304.2L641.9 300.3L633.7 295.3L645.5 292.1L638.7 286.7L651.0 284.2L645.7 278.5L658.3 276.7L654.6 270.8L667.3 269.8L665.1 263.7L677.7 263.6L677.3 257.5L689.5 258.1L690.7 252.0L702.5 253.5L705.3 247.6L716.3 249.8L720.7 244.2L730.8 247.1L736.8 241.9L745.7 245.5L753.1 240.7L760.8 245.0L769.5 240.8L775.8 245.6L785.7 241.9L790.5 247.2L801.3 244.2L804.6 249.9L816.2 247.7L817.8 253.6L830.0 252.1L829.9 258.3L842.5 257.5L840.8 263.8L853.6 263.9L850.2 270.0L862.9 270.9L858.0 277.0L870.5 278.6L864.1 284.5L876.0 286.9L868.3 292.3L879.5 295.5L870.5 300.5L880.9 304.3" stroke="#8f7f1e" stroke-width="1.2" fill="none" opacity="0.75" stroke-linejoin="round"/>
<ellipse cx="755.4" cy="310.0" rx="102.2" ry="56.2" fill="none" stroke="#8a3d14" stroke-width="1.4" opacity="0.35" transform="rotate(-2 755.4 308.6)" stroke-dasharray="9 5 14 4 6 7"/>
<ellipse cx="755.4" cy="311.7" rx="88.5" ry="48.7" fill="none" stroke="#8a3d14" stroke-width="1.4" opacity="0.3" transform="rotate(-2 755.4 308.6)" stroke-dasharray="9 5 14 4 6 7"/>
<ellipse cx="755.4" cy="313.4" rx="74.9" ry="41.2" fill="none" stroke="#8a3d14" stroke-width="1.4" opacity="0.3" transform="rotate(-2 755.4 308.6)" stroke-dasharray="9 5 14 4 6 7"/>
<ellipse cx="755.4" cy="315.0" rx="61.3" ry="33.7" fill="none" stroke="#8a3d14" stroke-width="1.4" opacity="0.25" transform="rotate(-2 755.4 308.6)" stroke-dasharray="9 5 14 4 6 7"/>
<ellipse cx="755.4" cy="316.7" rx="47.7" ry="26.2" fill="none" stroke="#8a3d14" stroke-width="1.4" opacity="0.25" transform="rotate(-2 755.4 308.6)" stroke-dasharray="9 5 14 4 6 7"/>
<ellipse cx="755.4" cy="318.4" rx="34.0" ry="18.7" fill="none" stroke="#8a3d14" stroke-width="1.4" opacity="0.2" transform="rotate(-2 755.4 308.6)" stroke-dasharray="9 5 14 4 6 7"/>
<circle cx="769" cy="250" r="1.6" fill="#d9d9e4"/>
<circle cx="775" cy="247" r="1.4" fill="#d9d9e4"/>
<circle cx="766" cy="256" r="1.2" fill="#d9d9e4"/>
<circle cx="772" cy="257" r="1.1" fill="#d9d9e4"/>
<circle cx="763" cy="253" r="1" fill="#d9d9e4"/>
<circle cx="581" cy="546" r="1.6" fill="#d9d9e4"/>
<circle cx="578" cy="550" r="1.2" fill="#d9d9e4"/>
<circle cx="692" cy="566" r="1.4" fill="#d9d9e4"/>
<circle cx="697" cy="568" r="1" fill="#d9d9e4"/>
<circle cx="501" cy="572" r="1.3" fill="#d9d9e4"/>
<circle cx="923" cy="472" r="1.2" fill="#d9d9e4"/>
<circle cx="675" cy="651" r="1.1" fill="#d9d9e4"/>
<circle cx="698" cy="652" r="1" fill="#d9d9e4"/>
<circle cx="547" cy="707" r="1.6" fill="#d9d9e4"/>
<circle cx="544" cy="703" r="1.1" fill="#d9d9e4"/>
<circle cx="529" cy="676" r="1" fill="#d9d9e4"/>
<circle cx="468" cy="213" r="1.4" fill="#d9d9e4"/>
<circle cx="948" cy="472" r="1" fill="#d9d9e4"/>
<circle cx="925" cy="614" r="1.1" fill="#d9d9e4"/>
<circle cx="826.5" cy="286.5" r="1.6" fill="#1418c8"/><circle cx="661.5" cy="324.5" r="1.2" fill="#1418c8"/>
</svg>
</div>
<div class="abs" style="left:418px;top:64px;width:128.2px;height:137.6px;background:rgba(255,255,255,.38);border-radius:0 5px 5px 5px"></div>
<div class="abs" style="left:425.4px;top:71.2px;width:111.2px;height:110.8px;border:2px solid #2a8cf5;border-radius:4px"></div>
<svg style="left:418px;top:64px" width="130" height="140" viewBox="418 64 130 140"><polygon points="479.8,85.6 514.3,108.8 479.8,132.7 445.9,108.8" fill="#0072e2"/><polygon points="445.9,108.8 479.8,132.7 479.8,165.9 445.9,142.7" fill="#0050a0"/><polygon points="514.3,108.8 479.8,132.7 479.8,165.9 514.3,142.7" fill="#004284"/></svg>
<div class="abs" style="left:1091.4px;top:65px;width:417px;height:30.4px;background:rgba(18,18,18,.93)"></div>
<div class="abs" style="left:1091.4px;top:95.4px;width:417px;height:488px;background:rgba(26,26,26,.86)"></div>
<div class="abs" style="left:1091px;top:64.6px;width:417.6px;height:519.2px;border:1px solid rgba(78,78,90,.75)"></div>
<div class="abs" style="left:1221.2px;top:72.3px;width:197.2px;height:20px;background:#0e0e0e;border:1px solid #4a4a4a;border-radius:3px"></div>
<div class="abs" style="left:1091.4px;top:115.8px;width:417px;height:1px;background:#d0d0d0"></div>
<div class="abs" style="left:1091.4px;top:463px;width:417px;height:1px;background:#d0d0d0"></div>
<svg style="left:0;top:0" width="1633" height="827" viewBox="0 0 1633 827" fill="none"><path d="M1104 79.6L1110.2 75.4L1116.4 79.6M1104 84L1110.2 79.8L1116.4 84" stroke="#fff" stroke-width="1.2" stroke-linecap="round" stroke-linejoin="round"/><path d="M1227.6 81.6L1232.2 84.8L1236.8 81.6" stroke="#fff" stroke-width="1.2" stroke-linecap="round" stroke-linejoin="round"/><rect x="1103.2" y="123.1" width="8.8" height="8.7" fill="#ffe64d"/><rect x="1456.5" y="120.0" width="15" height="15" fill="#555"/><path d="M1458.9 128.0L1462.3 131.3L1468.9 124.2" stroke="#3f83ff" stroke-width="2.1" stroke-linejoin="round" stroke-linecap="round"/><rect x="1103.2" y="144.1" width="8.8" height="8.7" fill="#ff7d38"/><rect x="1456.5" y="141.0" width="15" height="15" fill="#555"/><path d="M1458.9 149.0L1462.3 152.3L1468.9 145.2" stroke="#3f83ff" stroke-width="2.1" stroke-linejoin="round" stroke-linecap="round"/><rect x="1103.2" y="165.1" width="8.8" height="8.7" fill="#1f1fff"/><rect x="1456.5" y="162.0" width="15" height="15" fill="#555"/><path d="M1458.9 170.0L1462.3 173.3L1468.9 166.2" stroke="#3f83ff" stroke-width="2.1" stroke-linejoin="round" stroke-linecap="round"/><rect x="1103.2" y="186.1" width="8.8" height="8.7" fill="#b03029"/><rect x="1456.5" y="183.0" width="15" height="15" fill="#555"/><path d="M1458.9 191.0L1462.3 194.3L1468.9 187.2" stroke="#3f83ff" stroke-width="2.1" stroke-linejoin="round" stroke-linecap="round"/><rect x="1103.2" y="207.1" width="8.8" height="8.7" fill="#9654cc"/><rect x="1456.5" y="204.0" width="15" height="15" fill="#555"/><path d="M1458.9 212.0L1462.3 215.3L1468.9 208.2" stroke="#3f83ff" stroke-width="2.1" stroke-linejoin="round" stroke-linecap="round"/><rect x="1103.2" y="228.1" width="8.8" height="8.7" fill="#f04040"/><rect x="1456.5" y="225.0" width="15" height="15" fill="#555"/><path d="M1458.9 233.0L1462.3 236.3L1468.9 229.2" stroke="#3f83ff" stroke-width="2.1" stroke-linejoin="round" stroke-linecap="round"/><rect x="1103.2" y="249.1" width="8.8" height="8.7" fill="#665cc7"/><rect x="1456.5" y="246.0" width="15" height="15" fill="#555"/><path d="M1458.9 254.0L1462.3 257.3L1468.9 250.2" stroke="#3f83ff" stroke-width="2.1" stroke-linejoin="round" stroke-linecap="round"/><rect x="1103.2" y="270.1" width="8.8" height="8.7" fill="#4d80ba"/><rect x="1456.5" y="267.0" width="15" height="15" fill="#555"/><path d="M1458.9 275.0L1462.3 278.3L1468.9 271.2" stroke="#3f83ff" stroke-width="2.1" stroke-linejoin="round" stroke-linecap="round"/><rect x="1103.2" y="291.1" width="8.8" height="8.7" fill="#ffffff"/><rect x="1456.5" y="288.0" width="15" height="15" fill="#555"/><path d="M1458.9 296.0L1462.3 299.3L1468.9 292.2" stroke="#3f83ff" stroke-width="2.1" stroke-linejoin="round" stroke-linecap="round"/><rect x="1103.2" y="312.1" width="8.8" height="8.7" fill="#5ed194"/><rect x="1456.5" y="309.0" width="15" height="15" fill="#555"/><path d="M1458.9 317.0L1462.3 320.3L1468.9 313.2" stroke="#3f83ff" stroke-width="2.1" stroke-linejoin="round" stroke-linecap="round"/><rect x="1103.2" y="333.1" width="8.8" height="8.7" fill="#38489b"/><rect x="1456.5" y="330.0" width="15" height="15" fill="#555"/><rect x="1103.2" y="354.1" width="8.8" height="8.7" fill="#cd22d6"/><rect x="1456.5" y="351.0" width="15" height="15" fill="#555"/><rect x="1103.2" y="375.1" width="8.8" height="8.7" fill="#49adcf"/><rect x="1456.5" y="372.0" width="15" height="15" fill="#555"/><rect x="1103.2" y="396.1" width="8.8" height="8.7" fill="#ffff00"/><rect x="1456.5" y="393.0" width="15" height="15" fill="#555"/><rect x="1103.2" y="417.1" width="8.8" height="8.7" fill="#e6e6e6"/><rect x="1456.5" y="414.0" width="15" height="15" fill="#555"/><path d="M1458.9 422.0L1462.3 425.3L1468.9 418.2" stroke="#3f83ff" stroke-width="2.1" stroke-linejoin="round" stroke-linecap="round"/><rect x="1587" y="163.6" width="24" height="562" rx="12" fill="#fff"/><rect x="1593" y="169.8" width="11.8" height="548" rx="5.9" fill="#cdcdcd"/><rect x="1593" y="337" width="11.8" height="376" fill="#4479fb"/><circle cx="1599" cy="337.4" r="11.9" fill="#fff"/><circle cx="1599" cy="337.4" r="10" fill="#4479fb"/><path d="M1593.4 337.4H1604.6M1599 331.8V343" stroke="#fff" stroke-width="1.3"/><circle cx="1599" cy="713.2" r="12" fill="#fff"/><circle cx="1599" cy="713.2" r="10.3" fill="#4479fb"/><path d="M1535.1 305Q1535.1 303.1 1537 303.1H1576.1Q1578 303.1 1578 305V330.6L1585.8 337H1537Q1535.1 337 1535.1 335.1Z" fill="#fff"/><path d="M1539.1 715.4Q1539.1 713.7 1540.8 713.7H1586.3L1578 721.5V746Q1578 747.7 1576.3 747.7H1540.8Q1539.1 747.7 1539.1 746Z" fill="#fff"/><rect x="665" y="779.7" width="671" height="24.2" rx="12.1" fill="#fff"/><rect x="670.6" y="786" width="655" height="11.7" rx="5.8" fill="#4479fb"/><circle cx="1323.9" cy="791.8" r="12.1" fill="#fff"/><circle cx="1323.9" cy="791.8" r="10" fill="#4479fb"/><path d="M1338.4 791.8L1343.8 788.3V784.1Q1343.8 782.3 1345.6 782.3H1382.3Q1384.1 782.3 1384.1 784.1V799.9Q1384.1 801.7 1382.3 801.7H1345.6Q1343.8 801.7 1343.8 799.9V795.3Z" fill="#fff"/><path d="M1599 790.5L1610.3 796.5L1599 802.5L1587.7 796.5Z" fill="#4479fb" stroke="#fff" stroke-width="1" stroke-linejoin="round"/><path d="M1599 786.5L1610.3 792.5L1599 798.5L1587.7 792.5Z" fill="#4479fb" stroke="#fff" stroke-width="1" stroke-linejoin="round"/><path d="M1599 782.5L1610.3 788.5L1599 794.5L1587.7 788.5Z" fill="#4479fb" stroke="#fff" stroke-width="1" stroke-linejoin="round"/><rect x="1134" y="634" width="375" height="127" rx="4.5" fill="#fff"/><circle cx="1169" cy="664.1" r="14.5" stroke="#3f79f6" stroke-width="2.8"/><path d="M1162 663.8L1167.1 668.6L1175.5 659.5" stroke="#3f79f6" stroke-width="2.9" stroke-linecap="round" stroke-linejoin="round"/><circle cx="1475.8" cy="663.2" r="12.6" fill="#ededed"/><path d="M1468.6 656L1483 670.4M1483 656L1468.6 670.4" stroke="#8c8c8c" stroke-width="1.2"/><path d="M1150 692.4H1494" stroke="#e6e6e6" stroke-width="1"/><path d="M1213 723.3L1218.2 727.4L1223.4 723.3M1213 729.4L1218.2 733.6L1223.4 729.4" stroke="#2a3236" stroke-width="1.1"/></svg>
<div class="t" style="left:1129.4px;top:73.5px;font-size:12px;letter-spacing:0.18px;font-weight:700;color:#fff">Color Scheme</div>
<div class="t" style="left:1246.4px;top:76.5px;font-size:12.5px;letter-spacing:0.25px;color:#f2f2f2">Line Type</div>
<div class="t" style="left:1102.3px;top:98.6px;font-size:12.5px;letter-spacing:0.16px;font-weight:700;color:#fff">Line Type</div>
<div class="t" style="left:1228.5px;top:98.6px;font-size:12.5px;letter-spacing:-0.06px;font-weight:700;color:#fff">Time</div>
<div class="t" style="left:1290.6px;top:98.6px;font-size:12.5px;letter-spacing:0.06px;font-weight:700;color:#fff">Percent</div>
<div class="t" style="left:1351.5px;top:98.6px;font-size:12.5px;letter-spacing:0.16px;font-weight:700;color:#fff">Used filament</div>
<div class="t" style="left:1452.2px;top:98.6px;font-size:12.5px;letter-spacing:-0.07px;font-weight:700;color:#fff">Display</div>
<div class="t" style="left:1102.3px;top:445.3px;font-size:13px;letter-spacing:-0.05px;font-weight:700;color:#fff">Total Estimation</div>
<div class="t" style="left:1102.3px;top:468.5px;font-size:12.5px;letter-spacing:0.31px;color:#f2f2f2">Total Filament:</div>
<div class="t" style="left:1102.3px;top:487.5px;font-size:12.5px;letter-spacing:0.29px;color:#f2f2f2">Model Filament:</div>
<div class="t" style="left:1102.3px;top:506.5px;font-size:12.5px;letter-spacing:-0.02px;color:#f2f2f2">Cost:</div>
<div class="t" style="left:1102.3px;top:525.5px;font-size:12.5px;letter-spacing:0.22px;color:#f2f2f2">Prepare time:</div>
<div class="t" style="left:1102.3px;top:544.5px;font-size:12.5px;letter-spacing:0.45px;color:#f2f2f2">Model printing time:</div>
<div class="t" style="left:1102.3px;top:563.5px;font-size:12.5px;letter-spacing:0.41px;color:#f2f2f2">Total time:</div>
<div class="t" style="left:1226.4px;top:468.5px;font-size:12.5px;letter-spacing:0.06px;color:#f2f2f2">1.87 m</div>
<div class="t" style="left:1281.3px;top:468.5px;font-size:12.5px;letter-spacing:0.01px;color:#f2f2f2">4.58 g</div>
<div class="t" style="left:1226.4px;top:487.5px;font-size:12.5px;letter-spacing:0.06px;color:#f2f2f2">1.87 m</div>
<div class="t" style="left:1281.3px;top:487.5px;font-size:12.5px;letter-spacing:0.01px;color:#f2f2f2">4.58 g</div>
<div class="t" style="left:1226.4px;top:506.5px;font-size:12.5px;letter-spacing:-0.04px;color:#f2f2f2">0.00</div>
<div class="t" style="left:1226.4px;top:525.5px;font-size:12.5px;letter-spacing:-0.30px;color:#f2f2f2">9s</div>
<div class="t" style="left:1226.4px;top:544.5px;font-size:12.5px;letter-spacing:0.23px;color:#f2f2f2">3h1m</div>
<div class="t" style="left:1226.4px;top:563.5px;font-size:12.5px;letter-spacing:0.23px;color:#f2f2f2">3h1m</div>
<div class="t" style="left:441.6px;top:86.5px;font-size:15px;color:#ececec">1</div>
<div class="t" style="left:1547.5px;top:306.1px;font-size:12.5px;letter-spacing:-0.02px;color:#4479fb">283</div>
<div class="t" style="left:1541.0px;top:321.3px;font-size:12.5px;letter-spacing:-0.12px;color:#4479fb">17.02</div>
<div class="t" style="left:1557.4px;top:716.2px;font-size:12.5px;color:#4479fb">1</div>
<div class="t" style="left:1547.8px;top:731.1px;font-size:12.5px;letter-spacing:-0.06px;color:#4479fb">0.10</div>
<div class="t" style="left:1349.4px;top:785.0px;font-size:13px;letter-spacing:-0.08px;color:#4479fb">2094</div>
<div class="t" style="left:1191.3px;top:656.8px;font-size:13px;letter-spacing:-0.38px;font-weight:700;color:#333">Slice ok.</div>
<div class="t" style="left:1150.6px;top:720.8px;font-size:13px;letter-spacing:-0.29px;font-weight:700;color:#2a3236">Daily Tips</div>
<div class="t" style="left:1120.3px;top:121.3px;font-size:12.5px;letter-spacing:0.25px;color:#f2f2f2">Inner wall</div>
<div class="t" style="left:1228.5px;top:121.3px;font-size:12.5px;letter-spacing:0.19px;color:#f2f2f2">1h18m</div>
<div class="t" style="left:1290.6px;top:121.3px;font-size:12.5px;letter-spacing:-0.29px;color:#f2f2f2">42.9%</div>
<div class="t" style="left:1351.5px;top:121.3px;font-size:12.5px;letter-spacing:-0.02px;color:#f2f2f2">0.79 m</div>
<div class="t" style="left:1399.0px;top:121.3px;font-size:12.5px;letter-spacing:0.14px;color:#f2f2f2">1.93 g</div>
<div class="t" style="left:1120.3px;top:142.3px;font-size:12.5px;letter-spacing:0.34px;color:#f2f2f2">Outer wall</div>
<div class="t" style="left:1228.5px;top:142.3px;font-size:12.5px;letter-spacing:0.14px;color:#f2f2f2">32m13s</div>
<div class="t" style="left:1290.6px;top:142.3px;font-size:12.5px;letter-spacing:-0.29px;color:#f2f2f2">17.8%</div>
<div class="t" style="left:1351.5px;top:142.3px;font-size:12.5px;letter-spacing:-0.02px;color:#f2f2f2">0.27 m</div>
<div class="t" style="left:1399.0px;top:142.3px;font-size:12.5px;letter-spacing:0.14px;color:#f2f2f2">0.65 g</div>
<div class="t" style="left:1120.3px;top:163.3px;font-size:12.5px;letter-spacing:0.30px;color:#f2f2f2">Overhang wall</div>
<div class="t" style="left:1228.5px;top:163.3px;font-size:12.5px;letter-spacing:-0.21px;color:#f2f2f2">&lt;1s</div>
<div class="t" style="left:1290.6px;top:163.3px;font-size:12.5px;letter-spacing:-0.36px;color:#f2f2f2">&lt;0.1%</div>
<div class="t" style="left:1351.5px;top:163.3px;font-size:12.5px;letter-spacing:-0.02px;color:#f2f2f2">0.00 m</div>
<div class="t" style="left:1399.0px;top:163.3px;font-size:12.5px;letter-spacing:0.14px;color:#f2f2f2">0.00 g</div>
<div class="t" style="left:1120.3px;top:184.3px;font-size:12.5px;letter-spacing:0.18px;color:#f2f2f2">Sparse infill</div>
<div class="t" style="left:1228.5px;top:184.3px;font-size:12.5px;letter-spacing:0.14px;color:#f2f2f2">53m33s</div>
<div class="t" style="left:1290.6px;top:184.3px;font-size:12.5px;letter-spacing:-0.29px;color:#f2f2f2">29.5%</div>
<div class="t" style="left:1351.5px;top:184.3px;font-size:12.5px;letter-spacing:-0.02px;color:#f2f2f2">0.61 m</div>
<div class="t" style="left:1399.0px;top:184.3px;font-size:12.5px;letter-spacing:0.14px;color:#f2f2f2">1.50 g</div>
<div class="t" style="left:1120.3px;top:205.3px;font-size:12.5px;letter-spacing:0.31px;color:#f2f2f2">Internal solid infill</div>
<div class="t" style="left:1228.5px;top:205.3px;font-size:12.5px;letter-spacing:0.07px;color:#f2f2f2">5m59s</div>
<div class="t" style="left:1290.6px;top:205.3px;font-size:12.5px;letter-spacing:-0.40px;color:#f2f2f2">3.3%</div>
<div class="t" style="left:1351.5px;top:205.3px;font-size:12.5px;letter-spacing:-0.02px;color:#f2f2f2">0.15 m</div>
<div class="t" style="left:1399.0px;top:205.3px;font-size:12.5px;letter-spacing:0.14px;color:#f2f2f2">0.38 g</div>
<div class="t" style="left:1120.3px;top:226.3px;font-size:12.5px;letter-spacing:0.33px;color:#f2f2f2">Top surface</div>
<div class="t" style="left:1228.5px;top:226.3px;font-size:12.5px;letter-spacing:-0.09px;color:#f2f2f2">32s</div>
<div class="t" style="left:1290.6px;top:226.3px;font-size:12.5px;letter-spacing:-0.40px;color:#f2f2f2">0.3%</div>
<div class="t" style="left:1351.5px;top:226.3px;font-size:12.5px;letter-spacing:-0.02px;color:#f2f2f2">0.01 m</div>
<div class="t" style="left:1399.0px;top:226.3px;font-size:12.5px;letter-spacing:0.14px;color:#f2f2f2">0.03 g</div>
<div class="t" style="left:1120.3px;top:247.3px;font-size:12.5px;letter-spacing:0.37px;color:#f2f2f2">Bottom surface</div>
<div class="t" style="left:1228.5px;top:247.3px;font-size:12.5px;letter-spacing:-0.09px;color:#f2f2f2">46s</div>
<div class="t" style="left:1290.6px;top:247.3px;font-size:12.5px;letter-spacing:-0.40px;color:#f2f2f2">0.4%</div>
<div class="t" style="left:1351.5px;top:247.3px;font-size:12.5px;letter-spacing:-0.02px;color:#f2f2f2">0.01 m</div>
<div class="t" style="left:1399.0px;top:247.3px;font-size:12.5px;letter-spacing:0.14px;color:#f2f2f2">0.04 g</div>
<div class="t" style="left:1120.3px;top:268.3px;font-size:12.5px;letter-spacing:0.38px;color:#f2f2f2">Bridge</div>
<div class="t" style="left:1228.5px;top:268.3px;font-size:12.5px;letter-spacing:-0.09px;color:#f2f2f2">35s</div>
<div class="t" style="left:1290.6px;top:268.3px;font-size:12.5px;letter-spacing:-0.40px;color:#f2f2f2">0.3%</div>
<div class="t" style="left:1351.5px;top:268.3px;font-size:12.5px;letter-spacing:-0.02px;color:#f2f2f2">0.02 m</div>
<div class="t" style="left:1399.0px;top:268.3px;font-size:12.5px;letter-spacing:0.14px;color:#f2f2f2">0.05 g</div>
<div class="t" style="left:1120.3px;top:289.3px;font-size:12.5px;letter-spacing:0.23px;color:#f2f2f2">Gap infill</div>
<div class="t" style="left:1228.5px;top:289.3px;font-size:12.5px;letter-spacing:-0.21px;color:#f2f2f2">&lt;1s</div>
<div class="t" style="left:1290.6px;top:289.3px;font-size:12.5px;letter-spacing:-0.36px;color:#f2f2f2">&lt;0.1%</div>
<div class="t" style="left:1351.5px;top:289.3px;font-size:12.5px;letter-spacing:-0.02px;color:#f2f2f2">0.00 m</div>
<div class="t" style="left:1399.0px;top:289.3px;font-size:12.5px;letter-spacing:0.14px;color:#f2f2f2">0.00 g</div>
<div class="t" style="left:1120.3px;top:310.3px;font-size:12.5px;letter-spacing:0.19px;color:#f2f2f2">Custom</div>
<div class="t" style="left:1228.5px;top:310.3px;font-size:12.5px;letter-spacing:-0.09px;color:#f2f2f2">21s</div>
<div class="t" style="left:1290.6px;top:310.3px;font-size:12.5px;letter-spacing:-0.40px;color:#f2f2f2">0.2%</div>
<div class="t" style="left:1351.5px;top:310.3px;font-size:12.5px;letter-spacing:-0.02px;color:#f2f2f2">0.00 m</div>
<div class="t" style="left:1399.0px;top:310.3px;font-size:12.5px;letter-spacing:0.14px;color:#f2f2f2">0.01 g</div>
<div class="t" style="left:1120.3px;top:331.3px;font-size:12.5px;letter-spacing:0.12px;color:#f2f2f2">Travel</div>
<div class="t" style="left:1228.5px;top:331.3px;font-size:12.5px;letter-spacing:0.07px;color:#f2f2f2">9m36s</div>
<div class="t" style="left:1290.6px;top:331.3px;font-size:12.5px;letter-spacing:-0.40px;color:#f2f2f2">5.3%</div>
<div class="t" style="left:1120.3px;top:352.3px;font-size:12.5px;letter-spacing:0.26px;color:#f2f2f2">Retract</div>
<div class="t" style="left:1120.3px;top:373.3px;font-size:12.5px;letter-spacing:0.48px;color:#f2f2f2">Unretract</div>
<div class="t" style="left:1120.3px;top:394.3px;font-size:12.5px;letter-spacing:0.38px;color:#f2f2f2">Wipe</div>
<div class="t" style="left:1120.3px;top:415.3px;font-size:12.5px;letter-spacing:-0.30px;color:#f2f2f2">Seams</div>

<div class="abs" style="left:0;top:0;width:1633px;height:27px;background:#262d31"></div>
<div class="abs" style="left:0;top:27px;width:1633px;height:1px;background:#000"></div>
<div class="abs" style="left:0;top:28px;width:1633px;height:36px;background:#3b4446"></div>
<div class="abs" style="left:175px;top:28px;width:136px;height:36px;background:#4479fb"></div>
<svg style="left:0;top:0" width="1633" height="64" viewBox="0 0 1633 64" fill="none" stroke="#fff" stroke-width="1.3" stroke-linecap="round" stroke-linejoin="round">
 <path d="M12.5 6.7H27.5M12.5 12.5H27.5M12.5 18.2H27.5" stroke-width="1.4"/>
 <path d="M74 10.6L79.3 14.8L84.6 10.6" stroke-width="1.4"/>
 <path d="M104.5 1.5V23.5" stroke="#5a6164" stroke-width="1"/>
 <path d="M130.3 5H138.6L143.3 9.6V17.5Q143.3 19 141.8 19H130.3Q128.8 19 128.8 17.5V6.5Q128.8 5 130.3 5Z" stroke="#e6e6e6"/>
 <path d="M131.2 5V8.6H136.3V5Z" fill="#e6e6e6" stroke="none"/>
 <path d="M131.2 14.8H141V19H131.2Z" fill="#e6e6e6" stroke="none"/>
 <path d="M167.5 11.4L174.6 6V9.3C179.5 9.5 182.6 12.4 182.8 17.6C181 14.8 178.4 13.7 174.6 13.7V16.9Z" fill="#8c9193" stroke="none"/>
 <path d="M221.5 11.4L214.4 6V9.3C209.5 9.5 206.4 12.4 206.2 17.6C208 14.8 210.6 13.7 214.4 13.7V16.9Z" fill="#8c9193" stroke="none"/>
 <g stroke-width="1.2">
 <path d="M1542 11.6H1552.4"/>
 <rect x="1573.2" y="6.4" width="13.6" height="11.2" rx="0.8"/>
 <path d="M1573.2 9.3H1586.8"/>
 <path d="M1609 8.2L1617.8 16.8M1617.8 8.2L1609 16.8"/>
 </g>
 <!-- home -->
 <path d="M18.6 36L28.2 45.4H25.6V55.6H20.8V49.4H16.4V55.6H11.6V45.4H9Z" fill="#fff" stroke="#fff" stroke-width="0.6"/>
 <!-- prepare cube -->
 <path d="M75 38.6L82.6 42.4V50L75 53.8L67.4 50V42.4ZM67.6 42.5L75 46.2L82.4 42.5"/>
 <!-- preview layers -->
 <path d="M211 38.4L218.4 42L211 45.6L203.6 42ZM204.4 45.6L211 48.9L217.6 45.6M204.4 49.4L211 52.7L217.6 49.4"/>
 <!-- device -->
 <path d="M342.8 38.8H350.8V44.4H342.8ZM346.8 44.4V47M344.4 47.2H349.2M354.4 38.8H359.4V42.2M342.8 49.8V53.4H346.4M352.6 47.6H359.6V53.6H352.6ZM355.2 47.6V50.4H357.2V47.6" stroke-width="1.25"/>
 <!-- project -->
 <rect x="478.6" y="38.4" width="16.4" height="15" rx="1.6"/>
 <path d="M482 42.4H483M485.6 42.4H491.6M482 46H483M485.6 46H491.6M482 49.6H483M485.6 49.6H491.6"/>
 <!-- calibration -->
 <path d="M614.25 45.90L614.24 46.31L614.12 46.71L613.39 46.97L612.66 47.15L612.50 47.43L612.39 47.72L612.26 48.00L612.18 48.31L612.57 48.96L612.90 49.66L612.70 50.02L612.42 50.32L612.12 50.60L611.76 50.80L611.06 50.47L610.41 50.08L610.10 50.16L609.82 50.29L609.53 50.40L609.25 50.56L609.07 51.29L608.81 52.02L608.41 52.14L608.00 52.15L607.59 52.14L607.19 52.02L606.93 51.29L606.75 50.56L606.47 50.40L606.18 50.29L605.90 50.16L605.59 50.08L604.94 50.47L604.24 50.80L603.88 50.60L603.58 50.32L603.30 50.02L603.10 49.66L603.43 48.96L603.82 48.31L603.74 48.00L603.61 47.72L603.50 47.43L603.34 47.15L602.61 46.97L601.88 46.71L601.76 46.31L601.75 45.90L601.76 45.49L601.88 45.09L602.61 44.83L603.34 44.65L603.50 44.37L603.61 44.08L603.74 43.80L603.82 43.49L603.43 42.84L603.10 42.14L603.30 41.78L603.58 41.48L603.88 41.20L604.24 41.00L604.94 41.33L605.59 41.72L605.90 41.64L606.18 41.51L606.47 41.40L606.75 41.24L606.93 40.51L607.19 39.78L607.59 39.66L608.00 39.65L608.41 39.66L608.81 39.78L609.07 40.51L609.25 41.24L609.53 41.40L609.82 41.51L610.10 41.64L610.41 41.72L611.06 41.33L611.76 41.00L612.12 41.20L612.42 41.48L612.70 41.78L612.90 42.14L612.57 42.84L612.18 43.49L612.26 43.80L612.39 44.08L612.50 44.37L612.66 44.65L613.39 44.83L614.12 45.09L614.24 45.49Z" stroke-width="1.2"/>
 <path d="M608 43.1L610.6 46H609.1V48.7H606.9V46H605.4Z" fill="#fff" stroke="none"/>
 <!-- slice/print -->
 <g stroke="none">
 <path d="M1378 34H1390.2V58H1378A12 12 0 0 1 1378 34Z" fill="#4479fb"/>
 <path d="M1392 34H1470.2A12 12 0 0 1 1470.2 58H1392Z" fill="#4479fb"/>
 <path d="M1509 34H1521.2V58H1509A12 12 0 0 1 1509 34Z" fill="#4479fb"/>
 <path d="M1523 34H1583A12 12 0 0 1 1583 58H1523Z" fill="#6b6b6b"/>
 </g>
 <path d="M1376 45.2L1380 48L1384 45.2M1507 45.2L1511 48L1515 45.2"/>
</svg>
<div class="t" style="left:32.4px;top:6.6px;font-size:12.5px;letter-spacing:-0.46px;color:#fff">File</div>
<div class="t" style="left:803.0px;top:7.2px;font-size:12px;letter-spacing:-0.05px;color:#f2f2f2">CHARIZARD.LOW.POLY</div>
<div class="t" style="left:94.8px;top:37.7px;font-size:15px;color:#fff">Prepare</div>
<div class="t" style="left:230.6px;top:37.7px;font-size:15px;letter-spacing:0.06px;color:#fff">Preview</div>
<div class="t" style="left:370.6px;top:37.7px;font-size:15px;letter-spacing:-0.13px;color:#fff">Device</div>
<div class="t" style="left:505.8px;top:37.7px;font-size:15px;letter-spacing:0.13px;color:#fff">Project</div>
<div class="t" style="left:627.3px;top:37.7px;font-size:15px;letter-spacing:0.39px;color:#fff">Calibration</div>
<div class="t" style="left:1407.2px;top:37.9px;font-size:15px;letter-spacing:-0.02px;color:#fff">Slice all</div>
<div class="t" style="left:1538.6px;top:37.9px;font-size:15px;letter-spacing:0.41px;color:#a3a3a3">Print</div>
<div class="abs" style="left:0;top:64px;width:418px;height:763px;background:#fff"></div>
<div class="hdr" style="top:64px;height:29.6px"></div>
<div class="hdr" style="top:210.2px;height:34.6px"></div>
<div class="hdr" style="top:311px;height:30px"></div>
<div class="abs" style="left:402px;top:427px;width:15.5px;height:400px;background:#f1f1f1"></div>
<div class="abs" style="left:408.8px;top:569px;width:2.6px;height:88px;background:#5a5a5a;border-radius:1.3px"></div>
<div class="abs" style="left:0;top:420.6px;width:417.5px;height:1px;background:#cfcfcf"></div>
<div class="abs" style="left:341.1px;top:416.8px;width:53.5px;height:3px;background:#4479fb;border-radius:1.5px"></div>
<div class="box" style="left:1px;top:110px;width:382.0px;height:26.0px;background:#fff;border-color:#d4d4d4"></div>
<div class="box" style="left:98px;top:141px;width:310.0px;height:26.0px;background:#f0f0f0;border-color:#dcdcdc"></div>
<div class="box" style="left:31px;top:263px;width:358.0px;height:30.0px;background:#fff;border-color:#d4d4d4"></div>
<div class="box" style="left:27px;top:353px;width:325.0px;height:26.0px;background:#fff;border-color:#d4d4d4"></div>
<div class="abs" style="left:0;top:427px;width:402px;height:400px;overflow:hidden"><div class="abs" style="left:0;top:-427px;width:402px;height:827px">
<div class="box" style="left:193px;top:419px;width:120.0px;height:31.0px;background:#fff;border-color:#d4d4d4"></div>
<div class="box" style="left:193px;top:454px;width:120.0px;height:26.0px;background:#fff;border-color:#d4d4d4"></div>
<div class="box" style="left:193px;top:514px;width:120.0px;height:26.0px;background:#fff;border-color:#d4d4d4"></div>
<div class="box" style="left:193px;top:544px;width:120.0px;height:26.0px;background:#fff;border-color:#d4d4d4"></div>
<div class="box" style="left:193px;top:583px;width:120.0px;height:26.0px;background:#fff;border-color:#d4d4d4"></div>
<div class="box" style="left:193px;top:622px;width:120.0px;height:26.0px;background:#fff;border-color:#d4d4d4"></div>
<div class="box" style="left:193px;top:697px;width:120.0px;height:26.0px;background:#fff;border-color:#d4d4d4"></div>
<div class="box" style="left:194.4px;top:489.5px;width:15.4px;height:15.4px;border-color:#9a9a9a;border-radius:1.5px"></div>
<div class="abs" style="left:194px;top:786px;width:16.2px;height:16.2px;background:#4479fb;border-radius:1.5px"></div>
<div class="abs" style="left:194px;top:825.6px;width:16.2px;height:3px;background:#c8c8c8"></div>
</div></div>
<div class="abs" style="left:102.8px;top:315.5px;width:102.8px;height:21.2px;background:#dedede;border-radius:10.6px"></div>
<div class="abs" style="left:102.8px;top:315.5px;width:52px;height:21.2px;background:#4479fb;border-radius:10.6px"></div>
<div class="abs" style="left:334px;top:318.2px;width:26.8px;height:15.4px;background:#d9d9d9;border-radius:7.7px"></div>
<div class="abs" style="left:335px;top:319.2px;width:13.4px;height:13.4px;background:#fff;border-radius:50%"></div>
<div class="abs" style="left:6px;top:268px;width:19.7px;height:19.6px;background:#0a7cff"></div>
<div class="box" style="left:-3px;top:195px;width:13.6px;height:13px;border-color:#6a6a6a;border-radius:3px"></div>
<div class="abs" style="left:10px;top:621.3px;width:325.2px;height:34.2px;border:3px solid #fc1c0e;border-radius:5px"></div>
<div class="abs" style="left:101.6px;top:669.2px;width:294.4px;height:1px;background:#e6e6e6"></div>
<div class="abs" style="left:135px;top:752.8px;width:261px;height:1px;background:#e6e6e6"></div>
<svg style="left:0;top:0" width="418" height="827" viewBox="0 0 418 827" fill="none"><path d="M9.4 72.6H19.9V83Q19.9 84.3 18.6 84.3H9.4Q8.1 84.3 8.1 83V73.9Q8.1 72.6 9.4 72.6ZM8.6 72.9L11 71.2H23.6V80.6L19.9 83.8M19.9 72.6L23.5 71.3" stroke="#4a4f51" stroke-width="1.1" stroke-linejoin="round"/><path d="M15.7 72.8V76.3M14.2 76.4H17.1" stroke="#4a4f51" stroke-width="1.1"/><path d="M11 81.8L13.4 79.6Q15 78.6 18.2 79V81.8Z" fill="#4479fb"/><path d="M402.55 77.90L402.50 78.44L402.35 78.95L402.08 79.44L401.57 79.82L401.04 80.13L400.72 80.48L400.46 80.83L400.24 81.20L400.06 81.58L399.91 82.01L399.80 82.48L399.81 83.14L399.76 83.82L399.51 84.31L399.18 84.71L398.77 85.03L398.32 85.25L397.84 85.36L397.32 85.35L396.76 85.06L396.24 84.72L395.81 84.59L395.40 84.52L395.00 84.49L394.60 84.52L394.19 84.59L393.76 84.72L393.24 85.06L392.68 85.35L392.16 85.36L391.68 85.25L391.23 85.03L390.82 84.71L390.49 84.31L390.24 83.82L390.19 83.14L390.20 82.48L390.09 82.01L389.94 81.58L389.76 81.20L389.54 80.83L389.28 80.48L388.96 80.13L388.43 79.82L387.92 79.44L387.65 78.95L387.50 78.44L387.45 77.90L387.50 77.36L387.65 76.85L387.92 76.36L388.43 75.98L388.96 75.67L389.28 75.32L389.54 74.97L389.76 74.60L389.94 74.22L390.09 73.79L390.20 73.32L390.19 72.66L390.24 71.98L390.49 71.49L390.82 71.09L391.23 70.77L391.68 70.55L392.16 70.44L392.68 70.45L393.24 70.74L393.76 71.08L394.19 71.21L394.60 71.28L395.00 71.31L395.40 71.28L395.81 71.21L396.24 71.08L396.76 70.74L397.32 70.45L397.84 70.44L398.32 70.55L398.77 70.77L399.18 71.09L399.51 71.49L399.76 71.98L399.81 72.66L399.80 73.32L399.91 73.79L400.06 74.22L400.24 74.60L400.46 74.97L400.72 75.32L401.04 75.67L401.57 75.98L402.08 76.36L402.35 76.85L402.50 77.36Z" stroke="#3a4446" stroke-width="1.15" fill="none" stroke-linejoin="round"/><circle cx="395" cy="77.9" r="2.9" stroke="#3a4446" stroke-width="1.15" fill="none"/><path d="M402.55 227.20L402.50 227.74L402.35 228.25L402.08 228.74L401.57 229.12L401.04 229.43L400.72 229.78L400.46 230.13L400.24 230.50L400.06 230.88L399.91 231.31L399.80 231.78L399.81 232.44L399.76 233.12L399.51 233.61L399.18 234.01L398.77 234.33L398.32 234.55L397.84 234.66L397.32 234.65L396.76 234.36L396.24 234.02L395.81 233.89L395.40 233.82L395.00 233.79L394.60 233.82L394.19 233.89L393.76 234.02L393.24 234.36L392.68 234.65L392.16 234.66L391.68 234.55L391.23 234.33L390.82 234.01L390.49 233.61L390.24 233.12L390.19 232.44L390.20 231.78L390.09 231.31L389.94 230.88L389.76 230.50L389.54 230.13L389.28 229.78L388.96 229.43L388.43 229.12L387.92 228.74L387.65 228.25L387.50 227.74L387.45 227.20L387.50 226.66L387.65 226.15L387.92 225.66L388.43 225.28L388.96 224.97L389.28 224.62L389.54 224.27L389.76 223.90L389.94 223.52L390.09 223.09L390.20 222.62L390.19 221.96L390.24 221.28L390.49 220.79L390.82 220.39L391.23 220.07L391.68 219.85L392.16 219.74L392.68 219.75L393.24 220.04L393.76 220.38L394.19 220.51L394.60 220.58L395.00 220.61L395.40 220.58L395.81 220.51L396.24 220.38L396.76 220.04L397.32 219.75L397.84 219.74L398.32 219.85L398.77 220.07L399.18 220.39L399.51 220.79L399.76 221.28L399.81 221.96L399.80 222.62L399.91 223.09L400.06 223.52L400.24 223.90L400.46 224.27L400.72 224.62L401.04 224.97L401.57 225.28L402.08 225.66L402.35 226.15L402.50 226.66Z" stroke="#3a4446" stroke-width="1.15" fill="none" stroke-linejoin="round"/><circle cx="395" cy="227.2" r="2.9" stroke="#3a4446" stroke-width="1.15" fill="none"/><path d="M8.7 121.1L13.7 124.89999999999999L18.7 121.1" stroke="#8c8c8c" stroke-width="1" fill="none"/><path d="M395.3 116H389.8Q387.4 116 387.4 118.4V126.4Q387.4 128.8 389.8 128.8H397.8Q400.2 128.8 400.2 126.4V121.4" stroke="#4a4f51" stroke-width="1.15" fill="none" stroke-linecap="round"/><path d="M393.8 122.9L400.8 115.4" stroke="#4a4f51" stroke-width="1.3" fill="none" stroke-linecap="round"/><path d="M106 152L110.5 156.2L115 152" stroke="#a0a0a0" stroke-width="1" fill="none"/><path d="M11.6 221.4Q9.2 227.3 11.6 233.2M22 221.4Q24.6 227.3 22 233.2Q19.6 227.3 22 221.4" stroke="#4a4f51" stroke-width="1.05"/><path d="M14.4 221.4Q12 227.3 14.4 233.2M17 221.4Q14.6 227.3 17 233.2M19.6 221.4Q17.2 227.3 19.6 233.2" stroke="#4479fb" stroke-width="1.05"/><path d="M312.4 227H323.6M318 221.4V232.6M343.2 227H354.4" stroke="#3a3f41" stroke-width="1.15"/><path d="M39.4 275.6L43.9 279.8L48.4 275.6" stroke="#8c8c8c" stroke-width="1" fill="none"/><path d="M403.4 271H398.0Q395.6 271 395.6 273.4V281.2Q395.6 283.6 398.0 283.6H405.8Q408.2 283.6 408.2 281.2V276.3" stroke="#4a4f51" stroke-width="1.15" fill="none" stroke-linecap="round"/><path d="M401.9 277.8L408.8 270.4" stroke="#4a4f51" stroke-width="1.3" fill="none" stroke-linecap="round"/><path d="M11.4 320.4H24.6L21.6 324.6H9.2Z" stroke="#4a4f51" stroke-width="1.05" stroke-linejoin="round"/><path d="M24.6 324.4L21.6 328.4H9.2" stroke="#4479fb" stroke-width="1.1" stroke-linejoin="round"/><path d="M24.6 328.2L21.6 332.2H9.2" stroke="#4a4f51" stroke-width="1.05" stroke-linejoin="round"/><rect x="375.4" y="318.6" width="16.4" height="14.6" rx="1.6" stroke="#3a3f41" stroke-width="1.1"/><path d="M378.6 322.4H379.6M382 322.4H388.8M378.6 326H379.6M382 326H388.8M378.6 329.6H379.6M382 329.6H388.8" stroke="#3a3f41" stroke-width="1.1"/><circle cx="398.2" cy="322" r="2.1" stroke="#6f97f5" stroke-width="1"/><circle cx="405.4" cy="321.6" r="1.7" stroke="#6f97f5" stroke-width="1"/><circle cx="398.6" cy="330.6" r="1.9" stroke="#6f97f5" stroke-width="1"/><path d="M400 323.4L407.6 331.4M400 329L406.6 324.6" stroke="#6f97f5" stroke-width="1"/><path d="M9.8 372.0A5.7 5.7 0 1 1 16.4 365.6" stroke="#f06a40" stroke-width="1" fill="none" stroke-linecap="round"/><path d="M13.8 365.2L18.6 365.8L16.6 369.2Z" fill="#f06a40"/><path d="M35 364.6L39.8 369.0L44.6 364.6" stroke="#8c8c8c" stroke-width="1" fill="none"/><path d="M371.6 361H378.2L381.2 364V371H371.6ZM373.6 361V364.2H377.6V361M373.4 371V367.2H379.4V371" stroke="#3a3f41" stroke-width="1.05" stroke-linejoin="round"/><circle cx="398.6" cy="365.4" r="4.9" stroke="#3a3f41" stroke-width="1.15"/><path d="M402.2 369.2L407.6 374" stroke="#3a3f41" stroke-width="1.2" stroke-linecap="round"/><path d="M201 435.6L205.4 439.8L209.8 435.6" stroke="#8c8c8c" stroke-width="1" fill="none"/><path d="M201 465.6L205.4 469.8L209.8 465.6" stroke="#8c8c8c" stroke-width="1" fill="none"/><path d="M201 525.6L205.4 529.8000000000001L209.8 525.6" stroke="#8c8c8c" stroke-width="1" fill="none"/><path d="M201 555.6L205.4 559.8000000000001L209.8 555.6" stroke="#8c8c8c" stroke-width="1" fill="none"/><path d="M181.0 562.4A5.5 5.5 0 1 1 187.4 556.2" stroke="#f06a40" stroke-width="1" fill="none" stroke-linecap="round"/><path d="M184.8 555.8L189.6 556.4L187.6 559.8Z" fill="#f06a40"/><path d="M181.0 601.4A5.5 5.5 0 1 1 187.4 595.2" stroke="#f06a40" stroke-width="1" fill="none" stroke-linecap="round"/><path d="M184.8 594.8L189.6 595.4L187.6 598.8Z" fill="#f06a40"/><path d="M181.0 640.6A5.5 5.5 0 1 1 187.4 634.4" stroke="#f06a40" stroke-width="1" fill="none" stroke-linecap="round"/><path d="M184.8 634.0L189.6 634.6L187.6 638.0Z" fill="#f06a40"/><path d="M16.70 668.20L16.69 668.63L16.64 669.05L15.69 669.29L14.74 669.42L14.65 669.71L14.54 670.00L14.42 670.28L14.27 670.55L14.86 671.31L15.36 672.16L15.09 672.49L14.80 672.80L14.49 673.09L14.16 673.36L13.31 672.86L12.55 672.27L12.28 672.42L12.00 672.54L11.71 672.65L11.42 672.74L11.29 673.69L11.05 674.64L10.63 674.69L10.20 674.70L9.77 674.69L9.35 674.64L9.11 673.69L8.98 672.74L8.69 672.65L8.40 672.54L8.12 672.42L7.85 672.27L7.09 672.86L6.24 673.36L5.91 673.09L5.60 672.80L5.31 672.49L5.04 672.16L5.54 671.31L6.13 670.55L5.98 670.28L5.86 670.00L5.75 669.71L5.66 669.42L4.71 669.29L3.76 669.05L3.71 668.63L3.70 668.20L3.71 667.77L3.76 667.35L4.71 667.11L5.66 666.98L5.75 666.69L5.86 666.40L5.98 666.12L6.13 665.85L5.54 665.09L5.04 664.24L5.31 663.91L5.60 663.60L5.91 663.31L6.24 663.04L7.09 663.54L7.85 664.13L8.12 663.98L8.40 663.86L8.69 663.75L8.98 663.66L9.11 662.71L9.35 661.76L9.77 661.71L10.20 661.70L10.63 661.71L11.05 661.76L11.29 662.71L11.42 663.66L11.71 663.75L12.00 663.86L12.28 663.98L12.55 664.13L13.31 663.54L14.16 663.04L14.49 663.31L14.80 663.60L15.09 663.91L15.36 664.24L14.86 665.09L14.27 665.85L14.42 666.12L14.54 666.40L14.65 666.69L14.74 666.98L15.69 667.11L16.64 667.35L16.69 667.77Z" stroke="#4a4f51" stroke-width="1" fill="none" stroke-linejoin="round"/><circle cx="10.2" cy="668.2" r="2.2" stroke="#4a4f51" stroke-width="1" fill="none"/><circle cx="16" cy="672.8" r="4.6" fill="#fff"/><path d="M19.80 672.80L19.79 673.05L19.77 673.30L19.73 673.54L18.99 673.60L18.27 673.57L18.22 673.72L18.15 673.86L18.08 674.00L18.00 674.13L17.90 674.26L17.80 674.38L18.19 674.99L18.51 675.66L18.31 675.81L18.11 675.96L17.90 676.09L17.68 676.21L17.45 676.31L17.22 676.40L16.80 675.79L16.47 675.15L16.31 675.18L16.16 675.19L16.00 675.20L15.84 675.19L15.69 675.18L15.53 675.15L15.20 675.79L14.78 676.40L14.55 676.31L14.32 676.21L14.10 676.09L13.89 675.96L13.69 675.81L13.49 675.66L13.81 674.99L14.20 674.38L14.10 674.26L14.00 674.13L13.92 674.00L13.85 673.86L13.78 673.72L13.73 673.57L13.01 673.60L12.27 673.54L12.23 673.30L12.21 673.05L12.20 672.80L12.21 672.55L12.23 672.30L12.27 672.06L13.01 672.00L13.73 672.03L13.78 671.88L13.85 671.74L13.92 671.60L14.00 671.47L14.10 671.34L14.20 671.22L13.81 670.61L13.49 669.94L13.69 669.79L13.89 669.64L14.10 669.51L14.32 669.39L14.55 669.29L14.78 669.20L15.20 669.81L15.53 670.45L15.69 670.42L15.84 670.41L16.00 670.40L16.16 670.41L16.31 670.42L16.47 670.45L16.80 669.81L17.22 669.20L17.45 669.29L17.68 669.39L17.90 669.51L18.11 669.64L18.31 669.79L18.51 669.94L18.19 670.61L17.80 671.22L17.90 671.34L18.00 671.47L18.08 671.60L18.15 671.74L18.22 671.88L18.27 672.03L18.99 672.00L19.73 672.06L19.77 672.30L19.79 672.55Z" stroke="#4a4f51" stroke-width="1" fill="none" stroke-linejoin="round"/><path d="M19.95 753.00L19.93 753.53L19.88 754.06L18.86 754.40L17.84 754.62L17.72 755.01L17.57 755.39L17.41 755.76L17.21 756.12L17.79 757.00L18.27 757.96L17.93 758.37L17.56 758.76L17.17 759.13L16.76 759.47L15.80 758.99L14.93 758.41L14.56 758.61L14.19 758.77L13.81 758.92L13.42 759.04L13.20 760.06L12.86 761.08L12.33 761.13L11.80 761.15L11.27 761.13L10.74 761.08L10.40 760.06L10.18 759.04L9.79 758.92L9.41 758.77L9.04 758.61L8.68 758.41L7.80 758.99L6.84 759.47L6.43 759.13L6.04 758.76L5.67 758.37L5.33 757.96L5.81 757.00L6.39 756.12L6.19 755.76L6.03 755.39L5.88 755.01L5.76 754.62L4.74 754.40L3.72 754.06L3.67 753.53L3.65 753.00L3.67 752.47L3.72 751.94L4.74 751.60L5.76 751.38L5.88 750.99L6.03 750.61L6.19 750.24L6.39 749.88L5.81 749.00L5.33 748.04L5.67 747.63L6.04 747.24L6.43 746.87L6.84 746.53L7.80 747.01L8.67 747.59L9.04 747.39L9.41 747.23L9.79 747.08L10.18 746.96L10.40 745.94L10.74 744.92L11.27 744.87L11.80 744.85L12.33 744.87L12.86 744.92L13.20 745.94L13.42 746.96L13.81 747.08L14.19 747.23L14.56 747.39L14.93 747.59L15.80 747.01L16.76 746.53L17.17 746.87L17.56 747.24L17.93 747.63L18.27 748.04L17.79 749.00L17.21 749.88L17.41 750.24L17.57 750.61L17.72 750.99L17.84 751.38L18.86 751.60L19.88 751.94L19.93 752.47Z" stroke="#262e30" stroke-width="1.25" fill="none" stroke-linejoin="round"/><path d="M197.4 793.8L201.4 797.6L207.2 791.4" stroke="#fff" stroke-width="1.3" stroke-linecap="round" stroke-linejoin="round"/></svg>
<div class="t" style="left:8.7px;top:749px;font-size:8px;font-weight:700;color:#262e30">G</div>
<div class="t" style="left:34.2px;top:70.4px;font-size:15px;letter-spacing:0.49px">Printer</div>
<div class="t" style="left:22.4px;top:114.5px;font-size:15.5px;letter-spacing:-0.20px">Q1 Pro 0.2 nozzle</div>
<div class="t" style="left:8.5px;top:145.4px;font-size:15.5px;letter-spacing:0.06px">Plate type</div>
<div class="t" style="left:118.8px;top:145.7px;font-size:15.5px;letter-spacing:0.02px;color:#929292">Smooth PEI Plate / High Temp Plate</div>
<div class="t" style="left:14.5px;top:194.8px;font-size:13px;letter-spacing:-0.68px">Seal</div>
<div class="t" style="left:34.2px;top:218.5px;font-size:15px;letter-spacing:0.17px">Filament</div>
<div class="t" style="left:12.2px;top:270.4px;font-size:13px;color:#fff">1</div>
<div class="t" style="left:52.0px;top:270.8px;font-size:13.5px;letter-spacing:-0.34px">QIDI ABS Odorless</div>
<div class="t" style="left:36.3px;top:316.6px;font-size:15px;letter-spacing:-0.27px">Process</div>
<div class="t" style="left:112.5px;top:320.2px;font-size:12.5px;letter-spacing:-0.32px;color:#fff">Global</div>
<div class="t" style="left:158.0px;top:320.2px;font-size:12.5px;letter-spacing:-0.11px;color:#6b6b6b">Objects</div>
<div class="t" style="left:264.0px;top:316.7px;font-size:15px;letter-spacing:0.04px">Advanced</div>
<div class="t" style="left:48.4px;top:358.3px;font-size:15.5px;letter-spacing:-0.07px">* 0.06mm High Quality @Q1 Pro 0.2 nozzle</div>
<div class="t" style="left:14.2px;top:398.2px;font-size:15.5px;letter-spacing:0.24px;color:#6b6b6b">Quality</div>
<div class="t" style="left:92.5px;top:398.2px;font-size:15.5px;letter-spacing:0.46px;color:#6b6b6b">Strength</div>
<div class="t" style="left:183.9px;top:398.2px;font-size:15.5px;letter-spacing:-0.39px;color:#6b6b6b">Speed</div>
<div class="t" style="left:257.0px;top:398.2px;font-size:15.5px;letter-spacing:0.33px;color:#6b6b6b">Support</div>
<div class="t" style="left:344.1px;top:398.2px;font-size:15.5px;letter-spacing:-0.31px;font-weight:700;color:#f06a40">Others</div>
<div class="t" style="left:23.3px;top:428.9px;font-size:15.5px;letter-spacing:-0.01px">Slicing Mode</div>
<div class="t" style="left:214.0px;top:428.9px;font-size:15.5px;letter-spacing:-0.14px">Regular</div>
<div class="t" style="left:23.3px;top:458.9px;font-size:15.5px;letter-spacing:-0.05px">Print sequence</div>
<div class="t" style="left:214.0px;top:458.9px;font-size:15.5px;letter-spacing:-0.06px">By layer</div>
<div class="t" style="left:23.3px;top:488.9px;font-size:15.5px;letter-spacing:-0.18px">Spiral vase</div>
<div class="t" style="left:23.3px;top:518.9px;font-size:15.5px;letter-spacing:-0.16px">Timelapse</div>
<div class="t" style="left:214.0px;top:518.9px;font-size:15.5px;letter-spacing:0.34px">Traditional</div>
<div class="t" style="left:23.3px;top:548.9px;font-size:15.5px;letter-spacing:-0.39px;color:#f06a40">Fuzzy Skin</div>
<div class="t" style="left:214.0px;top:548.9px;font-size:15.5px;letter-spacing:0.09px">All walls</div>
<div class="t" style="left:23.3px;top:579.3px;font-size:15.5px;letter-spacing:-0.03px;color:#f06a40">Fuzzy skin point</div>
<div class="t" style="left:23.3px;top:596.9px;font-size:15.5px;letter-spacing:-0.04px;color:#f06a40">distance</div>
<div class="t" style="left:202.0px;top:587.9px;font-size:15.5px;letter-spacing:-0.95px">0.5</div>
<div class="t" style="left:283.6px;top:592.2px;font-size:11.5px;letter-spacing:0.11px;color:#6b6b6b">mm</div>
<div class="t" style="left:23.3px;top:626.7px;font-size:15.5px;letter-spacing:-0.15px;color:#f06a40">Fuzzy skin thickness</div>
<div class="t" style="left:202.0px;top:626.9px;font-size:15.5px;letter-spacing:-0.95px">0.2</div>
<div class="t" style="left:283.6px;top:631.2px;font-size:11.5px;letter-spacing:0.11px;color:#6b6b6b">mm</div>
<div class="t" style="left:26.5px;top:660.9px;font-size:15.5px;letter-spacing:-0.57px;font-weight:700">Advanced</div>
<div class="t" style="left:23.1px;top:693.3px;font-size:15.5px;letter-spacing:0.30px">Interlocking depth of</div>
<div class="t" style="left:23.1px;top:711.0px;font-size:15.5px;letter-spacing:0.01px">a segmented region</div>
<div class="t" style="left:201.4px;top:701.9px;font-size:15.5px">0</div>
<div class="t" style="left:283.6px;top:705.8px;font-size:11.5px;letter-spacing:0.11px;color:#6b6b6b">mm</div>
<div class="t" style="left:26.5px;top:744.7px;font-size:15.5px;letter-spacing:-0.15px;font-weight:700">G-code output</div>
<div class="t" style="left:23.1px;top:776.9px;font-size:15.5px;letter-spacing:0.00px">Reduce infill</div>
<div class="t" style="left:23.1px;top:794.6px;font-size:15.5px;letter-spacing:0.37px">retraction</div>
<div class="abs" style="left:0;top:825.4px;width:1633px;height:1.6px;background:#2a2c2c"></div>
</div>
</body>
</html>
